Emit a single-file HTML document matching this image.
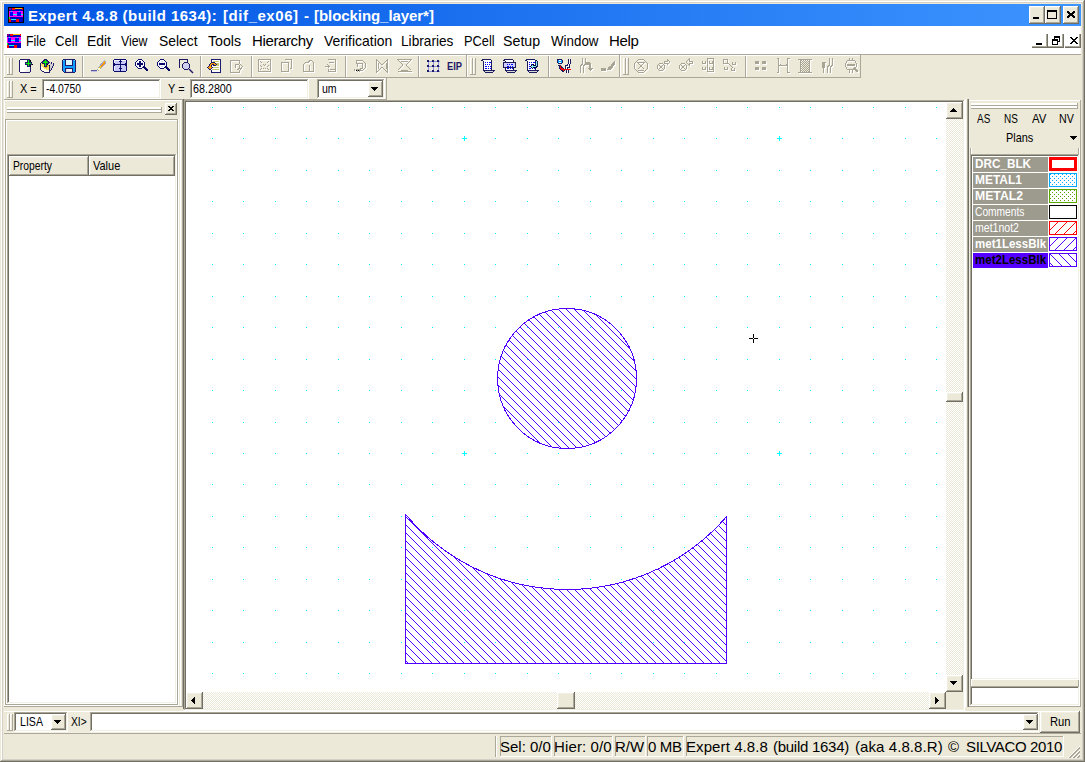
<!DOCTYPE html>
<html><head><meta charset="utf-8"><style>
html,body{margin:0;padding:0;width:1085px;height:762px;overflow:hidden;background:#ECE9D8}
.a{position:absolute}
.t{position:absolute;font-family:"Liberation Sans",sans-serif;white-space:pre}
</style></head><body>
<div class="a" style="left:0px;top:0px;width:1085px;height:762px;background:#ECE9D8"></div><div class="a" style="left:0px;top:1px;width:1084px;height:1px;background:#FFFFFF"></div><div class="a" style="left:1px;top:1px;width:1px;height:760px;background:#FFFFFF"></div><div class="a" style="left:2px;top:2px;width:1081px;height:1px;background:#D4D0C8"></div><div class="a" style="left:2px;top:2px;width:1px;height:758px;background:#D4D0C8"></div><div class="a" style="left:1084px;top:0px;width:1px;height:762px;background:#716F64"></div><div class="a" style="left:0px;top:761px;width:1085px;height:1px;background:#716F64"></div><div class="a" style="left:1083px;top:1px;width:1px;height:760px;background:#ACA899"></div><div class="a" style="left:1px;top:760px;width:1083px;height:1px;background:#ACA899"></div><div class="a" style="left:1082px;top:2px;width:1px;height:758px;background:#D4D0C8"></div><div class="a" style="left:2px;top:759px;width:1081px;height:1px;background:#D4D0C8"></div><div class="a" style="left:4px;top:4px;width:1077px;height:22px;background:linear-gradient(to right,#0054E3,#3D95FF)"></div><svg class="a" style="left:8px;top:7px" width="16" height="16" viewBox="0 0 16 16" shape-rendering="crispEdges">
<rect x="0" y="0" width="16" height="16" fill="#000"/>
<rect x="1" y="1" width="14" height="14" fill="#0000C0"/>
<rect x="1" y="1" width="2" height="2" fill="#800080"/>
<rect x="4" y="1" width="3" height="2" fill="#FF0000"/>
<rect x="7" y="1" width="7" height="1" fill="#FFC000"/>
<rect x="14" y="1" width="1" height="2" fill="#FF0000"/>
<rect x="1" y="4" width="14" height="6" fill="#FF00FF"/>
<rect x="2" y="5" width="3" height="4" fill="#0000FF"/>
<rect x="9" y="5" width="4" height="4" fill="#0000FF"/>
<rect x="5" y="7" width="4" height="1" fill="#00FFFF"/>
<rect x="13" y="7" width="2" height="1" fill="#00FFFF"/>
<rect x="3" y="4" width="1" height="1" fill="#00FFFF"/>
<rect x="11" y="4" width="1" height="1" fill="#00FFFF"/>
<rect x="1" y="10" width="1" height="2" fill="#00FF00"/>
<rect x="1" y="12" width="2" height="3" fill="#FF0000"/>
<rect x="8" y="12" width="3" height="3" fill="#FF0000"/>
<rect x="3" y="12" width="5" height="1" fill="#00FFFF"/>
</svg><div class="t" style="left:28px;top:8px;font-size:15px;line-height:15px;font-weight:bold;color:#fff;letter-spacing:0.48px;">Expert 4.8.8 (build 1634):</div><div class="t" style="left:223px;top:8px;font-size:15px;line-height:15px;font-weight:bold;color:#fff;letter-spacing:0.556px;">[dif_ex06]</div><div class="t" style="left:304px;top:8px;font-size:15px;line-height:15px;font-weight:bold;color:#fff;letter-spacing:0.0px;">-</div><div class="t" style="left:314px;top:8px;font-size:15px;line-height:15px;font-weight:bold;color:#fff;letter-spacing:-0.062px;">[blocking_layer*]</div><div class="a" style="left:1029px;top:6px;width:16px;height:18px;background:#716F64"></div><div class="a" style="left:1029px;top:6px;width:15px;height:17px;background:#FFFFFF"></div><div class="a" style="left:1030px;top:7px;width:14px;height:16px;background:#ACA899"></div><div class="a" style="left:1030px;top:7px;width:13px;height:15px;background:#F1EFE2"></div><div class="a" style="left:1031px;top:8px;width:12px;height:14px;background:#ECE9D8"></div><svg class="a" style="left:1029px;top:6px" width="16" height="18" shape-rendering="crispEdges"><rect x="4" y="11" width="6" height="2" fill="#000"/></svg><div class="a" style="left:1045px;top:6px;width:16px;height:18px;background:#716F64"></div><div class="a" style="left:1045px;top:6px;width:15px;height:17px;background:#FFFFFF"></div><div class="a" style="left:1046px;top:7px;width:14px;height:16px;background:#ACA899"></div><div class="a" style="left:1046px;top:7px;width:13px;height:15px;background:#F1EFE2"></div><div class="a" style="left:1047px;top:8px;width:12px;height:14px;background:#ECE9D8"></div><svg class="a" style="left:1045px;top:6px" width="16" height="18" shape-rendering="crispEdges"><rect x="2" y="4" width="10" height="9" fill="#000"/><rect x="3" y="6" width="8" height="6" fill="#ECE9D8"/></svg><div class="a" style="left:1063px;top:6px;width:16px;height:18px;background:#716F64"></div><div class="a" style="left:1063px;top:6px;width:15px;height:17px;background:#FFFFFF"></div><div class="a" style="left:1064px;top:7px;width:14px;height:16px;background:#ACA899"></div><div class="a" style="left:1064px;top:7px;width:13px;height:15px;background:#F1EFE2"></div><div class="a" style="left:1065px;top:8px;width:12px;height:14px;background:#ECE9D8"></div><svg class="a" style="left:1063px;top:6px" width="16" height="18" shape-rendering="crispEdges"><path d="M4 5h2v1h1v1h2v-1h1v-1h2v2h-1v1h-1v1h1v1h1v2h-2v-1h-1v-1h-2v1h-1v1h-2v-2h1v-1h1v-1h-1v-1h-1z" fill="#000"/></svg><div class="a" style="left:4px;top:26px;width:1077px;height:28px;background:#FFFFFF"></div><svg class="a" style="left:7px;top:34px" width="14" height="14" viewBox="1 1 14 14" shape-rendering="crispEdges">
<rect x="0" y="0" width="16" height="16" fill="#000"/>
<rect x="1" y="1" width="14" height="14" fill="#0000C0"/>
<rect x="1" y="1" width="2" height="2" fill="#800080"/>
<rect x="4" y="1" width="3" height="2" fill="#FF0000"/>
<rect x="7" y="1" width="7" height="1" fill="#FFC000"/>
<rect x="14" y="1" width="1" height="2" fill="#FF0000"/>
<rect x="1" y="4" width="14" height="6" fill="#FF00FF"/>
<rect x="2" y="5" width="3" height="4" fill="#0000FF"/>
<rect x="9" y="5" width="4" height="4" fill="#0000FF"/>
<rect x="5" y="7" width="4" height="1" fill="#00FFFF"/>
<rect x="13" y="7" width="2" height="1" fill="#00FFFF"/>
<rect x="3" y="4" width="1" height="1" fill="#00FFFF"/>
<rect x="11" y="4" width="1" height="1" fill="#00FFFF"/>
<rect x="1" y="10" width="1" height="2" fill="#00FF00"/>
<rect x="1" y="12" width="2" height="3" fill="#FF0000"/>
<rect x="8" y="12" width="3" height="3" fill="#FF0000"/>
<rect x="3" y="12" width="5" height="1" fill="#00FFFF"/>
</svg><div class="t" style="left:26.17px;top:33px;font-size:15px;line-height:15px;font-weight:normal;color:#000;transform:scaleX(0.8261);transform-origin:0 0;">File</div><div class="t" style="left:55.12px;top:33px;font-size:15px;line-height:15px;font-weight:normal;color:#000;transform:scaleX(0.8750);transform-origin:0 0;">Cell</div><div class="t" style="left:87.08px;top:33px;font-size:15px;line-height:15px;font-weight:normal;color:#000;transform:scaleX(0.9200);transform-origin:0 0;">Edit</div><div class="t" style="left:121.00px;top:33px;font-size:15px;line-height:15px;font-weight:normal;color:#000;transform:scaleX(0.8182);transform-origin:0 0;">View</div><div class="t" style="left:159.07px;top:33px;font-size:15px;line-height:15px;font-weight:normal;color:#000;transform:scaleX(0.9268);transform-origin:0 0;">Select</div><div class="t" style="left:208.00px;top:33px;font-size:15px;line-height:15px;font-weight:normal;color:#000;transform:scaleX(0.9429);transform-origin:0 0;">Tools</div><div class="t" style="left:252px;top:33px;font-size:15px;line-height:15px;font-weight:normal;color:#000;letter-spacing:-0.375px;">Hierarchy</div><div class="t" style="left:324.00px;top:33px;font-size:15px;line-height:15px;font-weight:normal;color:#000;transform:scaleX(0.9315);transform-origin:0 0;">Verification</div><div class="t" style="left:401.09px;top:33px;font-size:15px;line-height:15px;font-weight:normal;color:#000;transform:scaleX(0.9107);transform-origin:0 0;">Libraries</div><div class="t" style="left:464.15px;top:33px;font-size:15px;line-height:15px;font-weight:normal;color:#000;transform:scaleX(0.8529);transform-origin:0 0;">PCell</div><div class="t" style="left:503.05px;top:33px;font-size:15px;line-height:15px;font-weight:normal;color:#000;transform:scaleX(0.9474);transform-origin:0 0;">Setup</div><div class="t" style="left:551.00px;top:33px;font-size:15px;line-height:15px;font-weight:normal;color:#000;transform:scaleX(0.8889);transform-origin:0 0;">Window</div><div class="t" style="left:609px;top:33px;font-size:15px;line-height:15px;font-weight:normal;color:#000;letter-spacing:-0.333px;">Help</div><div class="a" style="left:1032px;top:34px;width:16px;height:14px;background:#716F64"></div><div class="a" style="left:1032px;top:34px;width:15px;height:13px;background:#ACA899"></div><div class="a" style="left:1032px;top:34px;width:14px;height:12px;background:#FFFFFF"></div><svg class="a" style="left:1032px;top:34px" width="16" height="14" shape-rendering="crispEdges"><rect x="4" y="9" width="6" height="2" fill="#000"/></svg><div class="a" style="left:1048px;top:34px;width:16px;height:14px;background:#716F64"></div><div class="a" style="left:1048px;top:34px;width:15px;height:13px;background:#ACA899"></div><div class="a" style="left:1048px;top:34px;width:14px;height:12px;background:#FFFFFF"></div><svg class="a" style="left:1048px;top:34px" width="16" height="14" shape-rendering="crispEdges"><rect x="6" y="2" width="6" height="6" fill="#000"/><rect x="7" y="4" width="4" height="3" fill="#fff"/><rect x="4" y="5" width="6" height="6" fill="#000"/><rect x="5" y="7" width="4" height="3" fill="#fff"/></svg><div class="a" style="left:1065px;top:34px;width:16px;height:14px;background:#716F64"></div><div class="a" style="left:1065px;top:34px;width:15px;height:13px;background:#ACA899"></div><div class="a" style="left:1065px;top:34px;width:14px;height:12px;background:#FFFFFF"></div><svg class="a" style="left:1065px;top:34px" width="16" height="14" shape-rendering="crispEdges"><path d="M5 3h2v1h1v1h2v-1h1v-1h2v1h-1v1h-1v1h-1v1h1v1h1v1h1v1h-2v-1h-1v-1h-2v1h-1v1h-2v-1h1v-1h1v-1h1v-1h-1v-1h-1v-1h-1z" fill="#000"/></svg><div class="a" style="left:4px;top:54px;width:1077px;height:1px;background:#ACA899"></div><div class="a" style="left:4px;top:55px;width:462px;height:1px;background:#FFFFFF"></div><div class="a" style="left:4px;top:55px;width:1px;height:22px;background:#FFFFFF"></div><div class="a" style="left:466px;top:55px;width:1px;height:23px;background:#ACA899"></div><div class="a" style="left:4px;top:77px;width:463px;height:1px;background:#ACA899"></div><div class="a" style="left:467px;top:55px;width:152px;height:1px;background:#FFFFFF"></div><div class="a" style="left:467px;top:55px;width:1px;height:22px;background:#FFFFFF"></div><div class="a" style="left:619px;top:55px;width:1px;height:23px;background:#ACA899"></div><div class="a" style="left:467px;top:77px;width:153px;height:1px;background:#ACA899"></div><div class="a" style="left:620px;top:55px;width:240px;height:1px;background:#FFFFFF"></div><div class="a" style="left:620px;top:55px;width:1px;height:22px;background:#FFFFFF"></div><div class="a" style="left:860px;top:55px;width:1px;height:23px;background:#ACA899"></div><div class="a" style="left:620px;top:77px;width:241px;height:1px;background:#ACA899"></div><div class="a" style="left:7px;top:58px;width:3px;height:17px;background:#ACA899"></div><div class="a" style="left:7px;top:58px;width:2px;height:16px;background:#FFFFFF"></div><div class="a" style="left:8px;top:59px;width:1px;height:15px;background:#ECE9D8"></div><div class="a" style="left:10px;top:58px;width:3px;height:17px;background:#ACA899"></div><div class="a" style="left:10px;top:58px;width:2px;height:16px;background:#FFFFFF"></div><div class="a" style="left:11px;top:59px;width:1px;height:15px;background:#ECE9D8"></div><div class="a" style="left:470px;top:58px;width:3px;height:17px;background:#ACA899"></div><div class="a" style="left:470px;top:58px;width:2px;height:16px;background:#FFFFFF"></div><div class="a" style="left:471px;top:59px;width:1px;height:15px;background:#ECE9D8"></div><div class="a" style="left:473px;top:58px;width:3px;height:17px;background:#ACA899"></div><div class="a" style="left:473px;top:58px;width:2px;height:16px;background:#FFFFFF"></div><div class="a" style="left:474px;top:59px;width:1px;height:15px;background:#ECE9D8"></div><div class="a" style="left:623px;top:58px;width:3px;height:17px;background:#ACA899"></div><div class="a" style="left:623px;top:58px;width:2px;height:16px;background:#FFFFFF"></div><div class="a" style="left:624px;top:59px;width:1px;height:15px;background:#ECE9D8"></div><div class="a" style="left:626px;top:58px;width:3px;height:17px;background:#ACA899"></div><div class="a" style="left:626px;top:58px;width:2px;height:16px;background:#FFFFFF"></div><div class="a" style="left:627px;top:59px;width:1px;height:15px;background:#ECE9D8"></div><div class="a" style="left:82px;top:56px;width:1px;height:21px;background:#ACA899"></div><div class="a" style="left:83px;top:56px;width:1px;height:21px;background:#FFFFFF"></div><div class="a" style="left:200px;top:56px;width:1px;height:21px;background:#ACA899"></div><div class="a" style="left:201px;top:56px;width:1px;height:21px;background:#FFFFFF"></div><div class="a" style="left:251px;top:56px;width:1px;height:21px;background:#ACA899"></div><div class="a" style="left:252px;top:56px;width:1px;height:21px;background:#FFFFFF"></div><div class="a" style="left:345px;top:56px;width:1px;height:21px;background:#ACA899"></div><div class="a" style="left:346px;top:56px;width:1px;height:21px;background:#FFFFFF"></div><div class="a" style="left:418px;top:56px;width:1px;height:21px;background:#ACA899"></div><div class="a" style="left:419px;top:56px;width:1px;height:21px;background:#FFFFFF"></div><div class="a" style="left:548px;top:56px;width:1px;height:21px;background:#ACA899"></div><div class="a" style="left:549px;top:56px;width:1px;height:21px;background:#FFFFFF"></div><div class="a" style="left:745px;top:56px;width:1px;height:21px;background:#ACA899"></div><div class="a" style="left:746px;top:56px;width:1px;height:21px;background:#FFFFFF"></div><svg class="a" style="left:91px;top:58px" width="17" height="17" shape-rendering="crispEdges"><rect x="0" y="12" width="6" height="1" fill="#5A5A9A"/><rect x="0" y="13" width="6" height="1" fill="#C0C0E0"/>
<path d="M6.5 12.5l1-3 6-7 1 1v2l-6 6z" fill="#FFD000" stroke="#A0A0C0"/>
<path d="M6.5 12.5l1-3 2 2z" fill="#FFFFC0"/><path d="M10 8l4-5v2l-4 4z" fill="#FF9000"/></svg><svg class="a" style="left:179px;top:58px" width="17" height="17" shape-rendering="crispEdges"><path d="M0.5 9.5v-8h8v2" fill="none" stroke="#1F1A66"/>
<path d="M5.5 4.5h3l2 2v3l-2 2h-3l-2-2v-3z" fill="#D0D0F0" stroke="#1F1A66"/>
<path d="M10 11l4 4" stroke="#1F1A66" stroke-width="1.5" shape-rendering="auto"/></svg><svg class="a" style="left:229px;top:58px" width="17" height="17" shape-rendering="crispEdges"><g transform="translate(1,1)"><path d="M1.5 2.5h9v3l3 3-3 4v2h-9z" fill="none" stroke="#FFFFFF"/><path d="M6.5 9.5v-3h3l1 1v3l-2 1" fill="none" stroke="#FFFFFF"/></g><path d="M1.5 2.5h9v3l3 3-3 4v2h-9z" fill="none" stroke="#A8A595"/><path d="M6.5 9.5v-3h3l1 1v3l-2 1" fill="none" stroke="#A8A595"/></svg><svg class="a" style="left:258px;top:58px" width="17" height="17" shape-rendering="crispEdges"><g transform="translate(1,1)"><rect x="0.5" y="1.5" width="12" height="12" fill="none" stroke="#FFFFFF"/><path d="M2 3l9 9M11 3l-9 9M2 7l4 4M11 7l-4 4" stroke="#FFFFFF" stroke-dasharray="1 1"/></g><rect x="0.5" y="1.5" width="12" height="12" fill="none" stroke="#A8A595"/><path d="M2 3l9 9M11 3l-9 9M2 7l4 4M11 7l-4 4" stroke="#A8A595" stroke-dasharray="1 1"/></svg><svg class="a" style="left:280px;top:58px" width="17" height="17" shape-rendering="crispEdges"><g transform="translate(1,1)"><path d="M4.5 1.5h7v9h-2" fill="none" stroke="#FFFFFF"/><rect x="1.5" y="4.5" width="7" height="9" fill="none" stroke="#FFFFFF"/></g><path d="M4.5 1.5h7v9h-2" fill="none" stroke="#A8A595"/><rect x="1.5" y="4.5" width="7" height="9" fill="none" stroke="#A8A595"/></svg><svg class="a" style="left:302px;top:58px" width="17" height="17" shape-rendering="crispEdges"><g transform="translate(1,1)"><path d="M1.5 13.5v-7l2-2h3l1-2h2l2 2v9z M7.5 13.5v-7" fill="none" stroke="#FFFFFF"/></g><path d="M1.5 13.5v-7l2-2h3l1-2h2l2 2v9z M7.5 13.5v-7" fill="none" stroke="#A8A595"/></svg><svg class="a" style="left:324px;top:58px" width="17" height="17" shape-rendering="crispEdges"><g transform="translate(1,1)"><path d="M3.5 1.5h8v12h-7v-3" fill="none" stroke="#FFFFFF"/><path d="M0.5 8.5h5l-2-2M5.5 8.5l-2 2" fill="none" stroke="#FFFFFF"/><path d="M5 4h5M6 11h5" stroke="#FFFFFF"/></g><path d="M3.5 1.5h8v12h-7v-3" fill="none" stroke="#A8A595"/><path d="M0.5 8.5h5l-2-2M5.5 8.5l-2 2" fill="none" stroke="#A8A595"/><path d="M5 4h5M6 11h5" stroke="#A8A595"/></svg><svg class="a" style="left:353px;top:58px" width="17" height="17" shape-rendering="crispEdges"><g transform="translate(1,1)"><path d="M3.5 5.5v-3h6l3 3v4l-3 3h-2v-2h2v-5h-5v3" fill="none" stroke="#FFFFFF"/><path d="M1 11v2M3 11h1v3M5 11h1v3" stroke="#FFFFFF"/></g><path d="M3.5 5.5v-3h6l3 3v4l-3 3h-2v-2h2v-5h-5v3" fill="none" stroke="#A8A595"/><path d="M1 11v2M3 11h1v3M5 11h1v3" stroke="#A8A595"/></svg><svg class="a" style="left:375px;top:58px" width="17" height="17" shape-rendering="crispEdges"><g transform="translate(1,1)"><path d="M1.5 1.5v13M12.5 1.5v13M1.5 1.5l5 5h1l5-5M1.5 14.5l5-5h1l5 5" fill="none" stroke="#FFFFFF"/><path d="M3 5v6M11 5v6" stroke="#FFFFFF"/></g><path d="M1.5 1.5v13M12.5 1.5v13M1.5 1.5l5 5h1l5-5M1.5 14.5l5-5h1l5 5" fill="none" stroke="#A8A595"/><path d="M3 5v6M11 5v6" stroke="#A8A595"/></svg><svg class="a" style="left:397px;top:58px" width="17" height="17" shape-rendering="crispEdges"><g transform="translate(1,1)"><path d="M0.5 1.5h14M0.5 13.5h14M0.5 1.5l5 5v1l-5 5M14.5 1.5l-5 5v1l5 5" fill="none" stroke="#FFFFFF"/><path d="M4 3h7M4 12h7" stroke="#FFFFFF"/></g><path d="M0.5 1.5h14M0.5 13.5h14M0.5 1.5l5 5v1l-5 5M14.5 1.5l-5 5v1l5 5" fill="none" stroke="#A8A595"/><path d="M4 3h7M4 12h7" stroke="#A8A595"/></svg><svg class="a" style="left:426px;top:58px" width="17" height="17" shape-rendering="crispEdges"><path d="M2 2v12M7 2v12M12 2v12M1 3h13M1 8h13M1 13h13" stroke="#9090E0"/><rect x="1" y="2" width="2" height="2" fill="#1F1A66"/><rect x="1" y="7" width="2" height="2" fill="#1F1A66"/><rect x="1" y="12" width="2" height="2" fill="#1F1A66"/><rect x="6" y="2" width="2" height="2" fill="#1F1A66"/><rect x="6" y="7" width="2" height="2" fill="#1F1A66"/><rect x="6" y="12" width="2" height="2" fill="#1F1A66"/><rect x="11" y="2" width="2" height="2" fill="#1F1A66"/><rect x="11" y="7" width="2" height="2" fill="#1F1A66"/><rect x="11" y="12" width="2" height="2" fill="#1F1A66"/></svg><svg class="a" style="left:579px;top:58px" width="17" height="17" shape-rendering="crispEdges"><g transform="translate(1,1)"><path d="M1.5 15v-7l2-2v-6M4.5 15v-7l2-2v-6" fill="none" stroke="#FFFFFF"/><path d="M7 4h3l2 2v4h2l-3 3-3-3h2v-3h-3z" fill="#FFFFFF"/></g><path d="M1.5 15v-7l2-2v-6M4.5 15v-7l2-2v-6" fill="none" stroke="#A8A595"/><path d="M7 4h3l2 2v4h2l-3 3-3-3h2v-3h-3z" fill="#A8A595"/></svg><svg class="a" style="left:601px;top:58px" width="17" height="17" shape-rendering="crispEdges"><g transform="translate(1,1)"><rect x="0" y="10" width="5" height="3" fill="#FFFFFF"/><path d="M6 12l2-4 6-6v4l-4 6z" fill="#FFFFFF"/><rect x="9" y="7" width="1" height="1" fill="#ECE9D8"/></g><rect x="0" y="10" width="5" height="3" fill="#A8A595"/><path d="M6 12l2-4 6-6v4l-4 6z" fill="#A8A595"/><rect x="9" y="7" width="1" height="1" fill="#ECE9D8"/></svg><svg class="a" style="left:634px;top:59px" width="17" height="17" shape-rendering="crispEdges"><g transform="translate(1,1)"><path d="M4.5 0.5h5l4 4v5l-4 4h-5l-4-4v-5z" fill="none" stroke="#FFFFFF"/><path d="M3.5 3.5l7 7M10.5 3.5l-7 7M4 3h6M4 11h6" stroke="#FFFFFF"/></g><path d="M4.5 0.5h5l4 4v5l-4 4h-5l-4-4v-5z" fill="none" stroke="#A8A595"/><path d="M3.5 3.5l7 7M10.5 3.5l-7 7M4 3h6M4 11h6" stroke="#A8A595"/></svg><svg class="a" style="left:656px;top:58px" width="17" height="17" shape-rendering="crispEdges"><g transform="translate(1,1)"><path d="M3.5 5.5h3l2 2v3l-2 2h-3l-2-2v-3z" fill="none" stroke="#FFFFFF"/><path d="M3 7l4 4M7 7l-4 4" stroke="#FFFFFF"/><path d="M8 3h3v-2l3 3-3 3v-2h-3z" fill="none" stroke="#FFFFFF"/></g><path d="M3.5 5.5h3l2 2v3l-2 2h-3l-2-2v-3z" fill="none" stroke="#A8A595"/><path d="M3 7l4 4M7 7l-4 4" stroke="#A8A595"/><path d="M8 3h3v-2l3 3-3 3v-2h-3z" fill="none" stroke="#A8A595"/></svg><svg class="a" style="left:678px;top:58px" width="17" height="17" shape-rendering="crispEdges"><g transform="translate(1,1)"><path d="M3.5 5.5h3l2 2v3l-2 2h-3l-2-2v-3z" fill="none" stroke="#FFFFFF"/><path d="M3 7l4 4M7 7l-4 4" stroke="#FFFFFF"/><path d="M14 3h-3v-2l-3 3 3 3v-2h3z" fill="none" stroke="#FFFFFF"/></g><path d="M3.5 5.5h3l2 2v3l-2 2h-3l-2-2v-3z" fill="none" stroke="#A8A595"/><path d="M3 7l4 4M7 7l-4 4" stroke="#A8A595"/><path d="M14 3h-3v-2l-3 3 3 3v-2h3z" fill="none" stroke="#A8A595"/></svg><svg class="a" style="left:701px;top:58px" width="17" height="17" shape-rendering="crispEdges"><g transform="translate(1,1)"><rect x="6.5" y="0.5" width="6" height="13" fill="none" stroke="#FFFFFF"/><path d="M1 3v2h3v-2M1 9v2h3v-2M8 3v2h3v-2M8 9v2h3v-2" fill="none" stroke="#FFFFFF"/></g><rect x="6.5" y="0.5" width="6" height="13" fill="none" stroke="#A8A595"/><path d="M1 3v2h3v-2M1 9v2h3v-2M8 3v2h3v-2M8 9v2h3v-2" fill="none" stroke="#A8A595"/></svg><svg class="a" style="left:723px;top:58px" width="17" height="17" shape-rendering="crispEdges"><g transform="translate(1,1)"><rect x="0.5" y="1.5" width="4" height="4" fill="none" stroke="#FFFFFF"/><path d="M5 5l5 5M9 4v2h3v-2M1 9v2h3v-2M8 10v2h3v-2" fill="none" stroke="#FFFFFF"/></g><rect x="0.5" y="1.5" width="4" height="4" fill="none" stroke="#A8A595"/><path d="M5 5l5 5M9 4v2h3v-2M1 9v2h3v-2M8 10v2h3v-2" fill="none" stroke="#A8A595"/></svg><svg class="a" style="left:755px;top:58px" width="17" height="17" shape-rendering="crispEdges"><g transform="translate(1,1)"><rect x="0" y="3" width="4" height="3" fill="#FFFFFF"/><rect x="7" y="3" width="4" height="3" fill="#FFFFFF"/><rect x="0" y="9" width="4" height="3" fill="#FFFFFF"/><rect x="7" y="9" width="4" height="3" fill="#FFFFFF"/></g><rect x="0" y="3" width="4" height="3" fill="#A8A595"/><rect x="7" y="3" width="4" height="3" fill="#A8A595"/><rect x="0" y="9" width="4" height="3" fill="#A8A595"/><rect x="7" y="9" width="4" height="3" fill="#A8A595"/></svg><svg class="a" style="left:776px;top:58px" width="17" height="17" shape-rendering="crispEdges"><g transform="translate(1,1)"><path d="M0.5 0.5h2v14h-2M13.5 0.5h-2v14h2M2 7h10M4 6v2M10 6v2" fill="none" stroke="#FFFFFF"/></g><path d="M0.5 0.5h2v14h-2M13.5 0.5h-2v14h2M2 7h10M4 6v2M10 6v2" fill="none" stroke="#A8A595"/></svg><svg class="a" style="left:798px;top:58px" width="17" height="17" shape-rendering="crispEdges"><g transform="translate(1,1)"><path d="M0 1.5h14M0 14.5h14M2.5 1v13M11.5 1v13" stroke="#FFFFFF"/><rect x="3" y="2" width="1" height="1" fill="#FFFFFF"/><rect x="3" y="4" width="1" height="1" fill="#FFFFFF"/><rect x="3" y="6" width="1" height="1" fill="#FFFFFF"/><rect x="3" y="8" width="1" height="1" fill="#FFFFFF"/><rect x="3" y="10" width="1" height="1" fill="#FFFFFF"/><rect x="3" y="12" width="1" height="1" fill="#FFFFFF"/><rect x="4" y="3" width="1" height="1" fill="#FFFFFF"/><rect x="4" y="5" width="1" height="1" fill="#FFFFFF"/><rect x="4" y="7" width="1" height="1" fill="#FFFFFF"/><rect x="4" y="9" width="1" height="1" fill="#FFFFFF"/><rect x="4" y="11" width="1" height="1" fill="#FFFFFF"/><rect x="4" y="13" width="1" height="1" fill="#FFFFFF"/><rect x="5" y="2" width="1" height="1" fill="#FFFFFF"/><rect x="5" y="4" width="1" height="1" fill="#FFFFFF"/><rect x="5" y="6" width="1" height="1" fill="#FFFFFF"/><rect x="5" y="8" width="1" height="1" fill="#FFFFFF"/><rect x="5" y="10" width="1" height="1" fill="#FFFFFF"/><rect x="5" y="12" width="1" height="1" fill="#FFFFFF"/><rect x="6" y="3" width="1" height="1" fill="#FFFFFF"/><rect x="6" y="5" width="1" height="1" fill="#FFFFFF"/><rect x="6" y="7" width="1" height="1" fill="#FFFFFF"/><rect x="6" y="9" width="1" height="1" fill="#FFFFFF"/><rect x="6" y="11" width="1" height="1" fill="#FFFFFF"/><rect x="6" y="13" width="1" height="1" fill="#FFFFFF"/><rect x="7" y="2" width="1" height="1" fill="#FFFFFF"/><rect x="7" y="4" width="1" height="1" fill="#FFFFFF"/><rect x="7" y="6" width="1" height="1" fill="#FFFFFF"/><rect x="7" y="8" width="1" height="1" fill="#FFFFFF"/><rect x="7" y="10" width="1" height="1" fill="#FFFFFF"/><rect x="7" y="12" width="1" height="1" fill="#FFFFFF"/><rect x="8" y="3" width="1" height="1" fill="#FFFFFF"/><rect x="8" y="5" width="1" height="1" fill="#FFFFFF"/><rect x="8" y="7" width="1" height="1" fill="#FFFFFF"/><rect x="8" y="9" width="1" height="1" fill="#FFFFFF"/><rect x="8" y="11" width="1" height="1" fill="#FFFFFF"/><rect x="8" y="13" width="1" height="1" fill="#FFFFFF"/><rect x="9" y="2" width="1" height="1" fill="#FFFFFF"/><rect x="9" y="4" width="1" height="1" fill="#FFFFFF"/><rect x="9" y="6" width="1" height="1" fill="#FFFFFF"/><rect x="9" y="8" width="1" height="1" fill="#FFFFFF"/><rect x="9" y="10" width="1" height="1" fill="#FFFFFF"/><rect x="9" y="12" width="1" height="1" fill="#FFFFFF"/><rect x="10" y="3" width="1" height="1" fill="#FFFFFF"/><rect x="10" y="5" width="1" height="1" fill="#FFFFFF"/><rect x="10" y="7" width="1" height="1" fill="#FFFFFF"/><rect x="10" y="9" width="1" height="1" fill="#FFFFFF"/><rect x="10" y="11" width="1" height="1" fill="#FFFFFF"/><rect x="10" y="13" width="1" height="1" fill="#FFFFFF"/></g><path d="M0 1.5h14M0 14.5h14M2.5 1v13M11.5 1v13" stroke="#A8A595"/><rect x="3" y="2" width="1" height="1" fill="#A8A595"/><rect x="3" y="4" width="1" height="1" fill="#A8A595"/><rect x="3" y="6" width="1" height="1" fill="#A8A595"/><rect x="3" y="8" width="1" height="1" fill="#A8A595"/><rect x="3" y="10" width="1" height="1" fill="#A8A595"/><rect x="3" y="12" width="1" height="1" fill="#A8A595"/><rect x="4" y="3" width="1" height="1" fill="#A8A595"/><rect x="4" y="5" width="1" height="1" fill="#A8A595"/><rect x="4" y="7" width="1" height="1" fill="#A8A595"/><rect x="4" y="9" width="1" height="1" fill="#A8A595"/><rect x="4" y="11" width="1" height="1" fill="#A8A595"/><rect x="4" y="13" width="1" height="1" fill="#A8A595"/><rect x="5" y="2" width="1" height="1" fill="#A8A595"/><rect x="5" y="4" width="1" height="1" fill="#A8A595"/><rect x="5" y="6" width="1" height="1" fill="#A8A595"/><rect x="5" y="8" width="1" height="1" fill="#A8A595"/><rect x="5" y="10" width="1" height="1" fill="#A8A595"/><rect x="5" y="12" width="1" height="1" fill="#A8A595"/><rect x="6" y="3" width="1" height="1" fill="#A8A595"/><rect x="6" y="5" width="1" height="1" fill="#A8A595"/><rect x="6" y="7" width="1" height="1" fill="#A8A595"/><rect x="6" y="9" width="1" height="1" fill="#A8A595"/><rect x="6" y="11" width="1" height="1" fill="#A8A595"/><rect x="6" y="13" width="1" height="1" fill="#A8A595"/><rect x="7" y="2" width="1" height="1" fill="#A8A595"/><rect x="7" y="4" width="1" height="1" fill="#A8A595"/><rect x="7" y="6" width="1" height="1" fill="#A8A595"/><rect x="7" y="8" width="1" height="1" fill="#A8A595"/><rect x="7" y="10" width="1" height="1" fill="#A8A595"/><rect x="7" y="12" width="1" height="1" fill="#A8A595"/><rect x="8" y="3" width="1" height="1" fill="#A8A595"/><rect x="8" y="5" width="1" height="1" fill="#A8A595"/><rect x="8" y="7" width="1" height="1" fill="#A8A595"/><rect x="8" y="9" width="1" height="1" fill="#A8A595"/><rect x="8" y="11" width="1" height="1" fill="#A8A595"/><rect x="8" y="13" width="1" height="1" fill="#A8A595"/><rect x="9" y="2" width="1" height="1" fill="#A8A595"/><rect x="9" y="4" width="1" height="1" fill="#A8A595"/><rect x="9" y="6" width="1" height="1" fill="#A8A595"/><rect x="9" y="8" width="1" height="1" fill="#A8A595"/><rect x="9" y="10" width="1" height="1" fill="#A8A595"/><rect x="9" y="12" width="1" height="1" fill="#A8A595"/><rect x="10" y="3" width="1" height="1" fill="#A8A595"/><rect x="10" y="5" width="1" height="1" fill="#A8A595"/><rect x="10" y="7" width="1" height="1" fill="#A8A595"/><rect x="10" y="9" width="1" height="1" fill="#A8A595"/><rect x="10" y="11" width="1" height="1" fill="#A8A595"/><rect x="10" y="13" width="1" height="1" fill="#A8A595"/></svg><svg class="a" style="left:820px;top:58px" width="17" height="17" shape-rendering="crispEdges"><g transform="translate(1,1)"><path d="M1.5 4.5h4M3.5 4v11M7.5 15v-6l2-2v-7M10.5 15v-6l2-2v-7" fill="none" stroke="#FFFFFF"/><rect x="2" y="4" width="3" height="6" fill="#FFFFFF"/></g><path d="M1.5 4.5h4M3.5 4v11M7.5 15v-6l2-2v-7M10.5 15v-6l2-2v-7" fill="none" stroke="#A8A595"/><rect x="2" y="4" width="3" height="6" fill="#A8A595"/></svg><svg class="a" style="left:844px;top:58px" width="17" height="17" shape-rendering="crispEdges"><g transform="translate(1,1)"><path d="M5.5 0v2M8.5 0v2M3.5 2.5h7l2 3v3l-2 3h-7l-2-3v-3z M5.5 12v3M8.5 12v3" fill="none" stroke="#FFFFFF"/><rect x="3" y="6" width="8" height="2" fill="#FFFFFF"/><path d="M10 10l4 4" stroke="#FFFFFF" stroke-width="2"/></g><path d="M5.5 0v2M8.5 0v2M3.5 2.5h7l2 3v3l-2 3h-7l-2-3v-3z M5.5 12v3M8.5 12v3" fill="none" stroke="#A8A595"/><rect x="3" y="6" width="8" height="2" fill="#A8A595"/><path d="M10 10l4 4" stroke="#A8A595" stroke-width="2"/></svg><svg class="a" style="left:18px;top:57px" width="16" height="17" shape-rendering="crispEdges"><rect x="2" y="2" width="10" height="1" fill="#231C6B"/><rect x="1" y="3" width="1" height="1" fill="#231C6B"/><rect x="2" y="3" width="7" height="1" fill="#FFFFFF"/><rect x="9" y="3" width="1" height="1" fill="#231C6B"/><rect x="10" y="3" width="1" height="1" fill="#00F000"/><rect x="11" y="3" width="1" height="1" fill="#231C6B"/><rect x="12" y="3" width="1" height="1" fill="#000000"/><rect x="1" y="4" width="1" height="1" fill="#231C6B"/><rect x="2" y="4" width="7" height="1" fill="#FFFFFF"/><rect x="9" y="4" width="1" height="1" fill="#231C6B"/><rect x="10" y="4" width="1" height="1" fill="#00F000"/><rect x="11" y="4" width="1" height="1" fill="#231C6B"/><rect x="12" y="4" width="1" height="1" fill="#000000"/><rect x="1" y="5" width="1" height="1" fill="#231C6B"/><rect x="2" y="5" width="5" height="1" fill="#FFFFFF"/><rect x="7" y="5" width="3" height="1" fill="#231C6B"/><rect x="10" y="5" width="1" height="1" fill="#00F000"/><rect x="11" y="5" width="3" height="1" fill="#231C6B"/><rect x="1" y="6" width="1" height="1" fill="#231C6B"/><rect x="2" y="6" width="5" height="1" fill="#FFFFFF"/><rect x="7" y="6" width="1" height="1" fill="#231C6B"/><rect x="8" y="6" width="5" height="1" fill="#00F000"/><rect x="13" y="6" width="1" height="1" fill="#231C6B"/><rect x="1" y="7" width="1" height="1" fill="#231C6B"/><rect x="2" y="7" width="5" height="1" fill="#FFFFFF"/><rect x="7" y="7" width="3" height="1" fill="#231C6B"/><rect x="10" y="7" width="1" height="1" fill="#00F000"/><rect x="11" y="7" width="3" height="1" fill="#231C6B"/><rect x="14" y="7" width="1" height="1" fill="#000000"/><rect x="1" y="8" width="1" height="1" fill="#231C6B"/><rect x="2" y="8" width="7" height="1" fill="#FFFFFF"/><rect x="9" y="8" width="1" height="1" fill="#231C6B"/><rect x="10" y="8" width="1" height="1" fill="#00F000"/><rect x="11" y="8" width="1" height="1" fill="#231C6B"/><rect x="12" y="8" width="1" height="1" fill="#000000"/><rect x="1" y="9" width="1" height="1" fill="#231C6B"/><rect x="2" y="9" width="7" height="1" fill="#FFFFFF"/><rect x="9" y="9" width="3" height="1" fill="#231C6B"/><rect x="12" y="9" width="1" height="1" fill="#000000"/><rect x="1" y="10" width="1" height="1" fill="#231C6B"/><rect x="2" y="10" width="10" height="1" fill="#FFFFFF"/><rect x="12" y="10" width="1" height="1" fill="#231C6B"/><rect x="1" y="11" width="1" height="1" fill="#231C6B"/><rect x="2" y="11" width="8" height="1" fill="#FFFFFF"/><rect x="10" y="11" width="2" height="1" fill="#EEEEEE"/><rect x="12" y="11" width="1" height="1" fill="#231C6B"/><rect x="1" y="12" width="1" height="1" fill="#231C6B"/><rect x="2" y="12" width="7" height="1" fill="#FFFFFF"/><rect x="9" y="12" width="3" height="1" fill="#EEEEEE"/><rect x="12" y="12" width="1" height="1" fill="#231C6B"/><rect x="1" y="13" width="1" height="1" fill="#231C6B"/><rect x="2" y="13" width="6" height="1" fill="#FFFFFF"/><rect x="8" y="13" width="4" height="1" fill="#EEEEEE"/><rect x="12" y="13" width="1" height="1" fill="#231C6B"/><rect x="1" y="14" width="1" height="1" fill="#231C6B"/><rect x="2" y="14" width="5" height="1" fill="#FFFFFF"/><rect x="7" y="14" width="4" height="1" fill="#EEEEEE"/><rect x="11" y="14" width="1" height="1" fill="#DDDDDD"/><rect x="12" y="14" width="1" height="1" fill="#231C6B"/><rect x="2" y="15" width="10" height="1" fill="#231C6B"/></svg><svg class="a" style="left:39px;top:57px" width="16" height="17" shape-rendering="crispEdges"><rect x="5" y="2" width="3" height="1" fill="#231C6B"/><rect x="4" y="3" width="2" height="1" fill="#231C6B"/><rect x="6" y="3" width="1" height="1" fill="#00F000"/><rect x="7" y="3" width="2" height="1" fill="#231C6B"/><rect x="3" y="4" width="2" height="1" fill="#231C6B"/><rect x="5" y="4" width="3" height="1" fill="#00F000"/><rect x="8" y="4" width="2" height="1" fill="#231C6B"/><rect x="2" y="5" width="2" height="1" fill="#231C6B"/><rect x="4" y="5" width="5" height="1" fill="#00F000"/><rect x="9" y="5" width="2" height="1" fill="#231C6B"/><rect x="12" y="5" width="1" height="1" fill="#231C6B"/><rect x="1" y="6" width="1" height="1" fill="#231C6B"/><rect x="2" y="6" width="1" height="1" fill="#F8E060"/><rect x="3" y="6" width="3" height="1" fill="#231C6B"/><rect x="6" y="6" width="1" height="1" fill="#00F000"/><rect x="7" y="6" width="3" height="1" fill="#231C6B"/><rect x="10" y="6" width="2" height="1" fill="#D0D0D0"/><rect x="12" y="6" width="1" height="1" fill="#231C6B"/><rect x="14" y="6" width="1" height="1" fill="#231C6B"/><rect x="1" y="7" width="1" height="1" fill="#231C6B"/><rect x="2" y="7" width="3" height="1" fill="#F8E060"/><rect x="5" y="7" width="1" height="1" fill="#231C6B"/><rect x="6" y="7" width="1" height="1" fill="#00F000"/><rect x="7" y="7" width="1" height="1" fill="#231C6B"/><rect x="8" y="7" width="1" height="1" fill="#000000"/><rect x="9" y="7" width="5" height="1" fill="#D0D0D0"/><rect x="14" y="7" width="1" height="1" fill="#231C6B"/><rect x="1" y="8" width="1" height="1" fill="#231C6B"/><rect x="2" y="8" width="3" height="1" fill="#F8E060"/><rect x="5" y="8" width="1" height="1" fill="#231C6B"/><rect x="6" y="8" width="1" height="1" fill="#00F000"/><rect x="7" y="8" width="1" height="1" fill="#231C6B"/><rect x="8" y="8" width="2" height="1" fill="#E0A020"/><rect x="10" y="8" width="1" height="1" fill="#000000"/><rect x="11" y="8" width="3" height="1" fill="#D0D0D0"/><rect x="14" y="8" width="1" height="1" fill="#231C6B"/><rect x="1" y="9" width="1" height="1" fill="#231C6B"/><rect x="2" y="9" width="1" height="1" fill="#FFFDE8"/><rect x="3" y="9" width="2" height="1" fill="#F8E060"/><rect x="5" y="9" width="3" height="1" fill="#231C6B"/><rect x="8" y="9" width="1" height="1" fill="#E0A020"/><rect x="9" y="9" width="1" height="1" fill="#F8E060"/><rect x="10" y="9" width="1" height="1" fill="#231C6B"/><rect x="11" y="9" width="2" height="1" fill="#D0D0D0"/><rect x="13" y="9" width="1" height="1" fill="#231C6B"/><rect x="1" y="10" width="1" height="1" fill="#231C6B"/><rect x="2" y="10" width="2" height="1" fill="#FFFDE8"/><rect x="4" y="10" width="2" height="1" fill="#F8E060"/><rect x="6" y="10" width="2" height="1" fill="#E0A020"/><rect x="8" y="10" width="2" height="1" fill="#F8E060"/><rect x="10" y="10" width="1" height="1" fill="#231C6B"/><rect x="11" y="10" width="2" height="1" fill="#D0D0D0"/><rect x="13" y="10" width="1" height="1" fill="#231C6B"/><rect x="1" y="11" width="1" height="1" fill="#231C6B"/><rect x="2" y="11" width="3" height="1" fill="#FFFDE8"/><rect x="5" y="11" width="5" height="1" fill="#F8E060"/><rect x="10" y="11" width="1" height="1" fill="#231C6B"/><rect x="11" y="11" width="1" height="1" fill="#D0D0D0"/><rect x="12" y="11" width="1" height="1" fill="#231C6B"/><rect x="1" y="12" width="1" height="1" fill="#231C6B"/><rect x="2" y="12" width="5" height="1" fill="#FFFDE8"/><rect x="7" y="12" width="3" height="1" fill="#F8E060"/><rect x="10" y="12" width="1" height="1" fill="#231C6B"/><rect x="11" y="12" width="1" height="1" fill="#D0D0D0"/><rect x="12" y="12" width="1" height="1" fill="#231C6B"/><rect x="2" y="13" width="1" height="1" fill="#231C6B"/><rect x="3" y="13" width="7" height="1" fill="#FFFDE8"/><rect x="10" y="13" width="2" height="1" fill="#231C6B"/><rect x="3" y="14" width="2" height="1" fill="#231C6B"/><rect x="5" y="14" width="5" height="1" fill="#FFFDE8"/><rect x="10" y="14" width="1" height="1" fill="#231C6B"/><rect x="5" y="15" width="6" height="1" fill="#231C6B"/></svg><svg class="a" style="left:61px;top:57px" width="16" height="17" shape-rendering="crispEdges"><rect x="2" y="2" width="12" height="1" fill="#231C6B"/><rect x="1" y="3" width="1" height="1" fill="#231C6B"/><rect x="2" y="3" width="1" height="1" fill="#60D0FF"/><rect x="3" y="3" width="1" height="1" fill="#10A0FF"/><rect x="4" y="3" width="1" height="1" fill="#231C6B"/><rect x="5" y="3" width="6" height="1" fill="#DDF8FF"/><rect x="11" y="3" width="1" height="1" fill="#231C6B"/><rect x="12" y="3" width="1" height="1" fill="#10A0FF"/><rect x="13" y="3" width="1" height="1" fill="#60D0FF"/><rect x="14" y="3" width="1" height="1" fill="#231C6B"/><rect x="1" y="4" width="1" height="1" fill="#231C6B"/><rect x="2" y="4" width="2" height="1" fill="#10A0FF"/><rect x="4" y="4" width="1" height="1" fill="#231C6B"/><rect x="5" y="4" width="6" height="1" fill="#DDF8FF"/><rect x="11" y="4" width="1" height="1" fill="#231C6B"/><rect x="12" y="4" width="2" height="1" fill="#10A0FF"/><rect x="14" y="4" width="1" height="1" fill="#231C6B"/><rect x="1" y="5" width="1" height="1" fill="#231C6B"/><rect x="2" y="5" width="2" height="1" fill="#10A0FF"/><rect x="4" y="5" width="1" height="1" fill="#231C6B"/><rect x="5" y="5" width="6" height="1" fill="#DDF8FF"/><rect x="11" y="5" width="1" height="1" fill="#231C6B"/><rect x="12" y="5" width="2" height="1" fill="#10A0FF"/><rect x="14" y="5" width="1" height="1" fill="#231C6B"/><rect x="1" y="6" width="1" height="1" fill="#231C6B"/><rect x="2" y="6" width="2" height="1" fill="#10A0FF"/><rect x="4" y="6" width="1" height="1" fill="#231C6B"/><rect x="5" y="6" width="6" height="1" fill="#DDF8FF"/><rect x="11" y="6" width="1" height="1" fill="#231C6B"/><rect x="12" y="6" width="2" height="1" fill="#10A0FF"/><rect x="14" y="6" width="1" height="1" fill="#231C6B"/><rect x="1" y="7" width="1" height="1" fill="#231C6B"/><rect x="2" y="7" width="2" height="1" fill="#10A0FF"/><rect x="4" y="7" width="1" height="1" fill="#231C6B"/><rect x="5" y="7" width="6" height="1" fill="#DDF8FF"/><rect x="11" y="7" width="1" height="1" fill="#231C6B"/><rect x="12" y="7" width="2" height="1" fill="#10A0FF"/><rect x="14" y="7" width="1" height="1" fill="#231C6B"/><rect x="1" y="8" width="1" height="1" fill="#231C6B"/><rect x="2" y="8" width="2" height="1" fill="#10A0FF"/><rect x="4" y="8" width="8" height="1" fill="#231C6B"/><rect x="12" y="8" width="2" height="1" fill="#10A0FF"/><rect x="14" y="8" width="1" height="1" fill="#231C6B"/><rect x="1" y="9" width="1" height="1" fill="#231C6B"/><rect x="2" y="9" width="12" height="1" fill="#10A0FF"/><rect x="14" y="9" width="1" height="1" fill="#231C6B"/><rect x="1" y="10" width="1" height="1" fill="#231C6B"/><rect x="2" y="10" width="12" height="1" fill="#10A0FF"/><rect x="14" y="10" width="1" height="1" fill="#231C6B"/><rect x="1" y="11" width="1" height="1" fill="#231C6B"/><rect x="2" y="11" width="2" height="1" fill="#10A0FF"/><rect x="4" y="11" width="8" height="1" fill="#231C6B"/><rect x="12" y="11" width="2" height="1" fill="#10A0FF"/><rect x="14" y="11" width="1" height="1" fill="#231C6B"/><rect x="1" y="12" width="1" height="1" fill="#231C6B"/><rect x="2" y="12" width="2" height="1" fill="#10A0FF"/><rect x="4" y="12" width="1" height="1" fill="#231C6B"/><rect x="5" y="12" width="1" height="1" fill="#D8D8D8"/><rect x="6" y="12" width="5" height="1" fill="#F4F4F4"/><rect x="11" y="12" width="1" height="1" fill="#231C6B"/><rect x="12" y="12" width="2" height="1" fill="#10A0FF"/><rect x="14" y="12" width="1" height="1" fill="#231C6B"/><rect x="1" y="13" width="1" height="1" fill="#231C6B"/><rect x="2" y="13" width="2" height="1" fill="#10A0FF"/><rect x="4" y="13" width="1" height="1" fill="#231C6B"/><rect x="5" y="13" width="1" height="1" fill="#D8D8D8"/><rect x="6" y="13" width="5" height="1" fill="#F4F4F4"/><rect x="11" y="13" width="1" height="1" fill="#231C6B"/><rect x="12" y="13" width="2" height="1" fill="#10A0FF"/><rect x="14" y="13" width="1" height="1" fill="#231C6B"/><rect x="2" y="14" width="1" height="1" fill="#231C6B"/><rect x="3" y="14" width="1" height="1" fill="#10A0FF"/><rect x="4" y="14" width="1" height="1" fill="#231C6B"/><rect x="5" y="14" width="6" height="1" fill="#D8D8D8"/><rect x="11" y="14" width="1" height="1" fill="#231C6B"/><rect x="12" y="14" width="2" height="1" fill="#10A0FF"/><rect x="14" y="14" width="1" height="1" fill="#231C6B"/><rect x="3" y="15" width="11" height="1" fill="#231C6B"/></svg><svg class="a" style="left:111px;top:57px" width="16" height="17" shape-rendering="crispEdges"><rect x="3" y="2" width="12" height="1" fill="#0A0A6A"/><rect x="2" y="3" width="1" height="1" fill="#0A0A6A"/><rect x="3" y="3" width="6" height="1" fill="#F0F0FF"/><rect x="9" y="3" width="1" height="1" fill="#0A0A6A"/><rect x="10" y="3" width="5" height="1" fill="#F0F0FF"/><rect x="15" y="3" width="1" height="1" fill="#0A0A6A"/><rect x="2" y="4" width="1" height="1" fill="#0A0A6A"/><rect x="3" y="4" width="1" height="1" fill="#F0F0FF"/><rect x="4" y="4" width="4" height="1" fill="#C8C8F8"/><rect x="8" y="4" width="3" height="1" fill="#0A0A6A"/><rect x="11" y="4" width="4" height="1" fill="#C8C8F8"/><rect x="15" y="4" width="1" height="1" fill="#0A0A6A"/><rect x="2" y="5" width="1" height="1" fill="#0A0A6A"/><rect x="3" y="5" width="1" height="1" fill="#F0F0FF"/><rect x="4" y="5" width="5" height="1" fill="#C8C8F8"/><rect x="9" y="5" width="1" height="1" fill="#0A0A6A"/><rect x="10" y="5" width="5" height="1" fill="#C8C8F8"/><rect x="15" y="5" width="1" height="1" fill="#0A0A6A"/><rect x="2" y="6" width="2" height="1" fill="#0A0A6A"/><rect x="4" y="6" width="5" height="1" fill="#C8C8F8"/><rect x="9" y="6" width="1" height="1" fill="#0A0A6A"/><rect x="10" y="6" width="4" height="1" fill="#C8C8F8"/><rect x="14" y="6" width="2" height="1" fill="#0A0A6A"/><rect x="2" y="7" width="14" height="1" fill="#0A0A6A"/><rect x="2" y="8" width="2" height="1" fill="#0A0A6A"/><rect x="4" y="8" width="5" height="1" fill="#C8C8F8"/><rect x="9" y="8" width="1" height="1" fill="#0A0A6A"/><rect x="10" y="8" width="4" height="1" fill="#C8C8F8"/><rect x="14" y="8" width="2" height="1" fill="#0A0A6A"/><rect x="2" y="9" width="1" height="1" fill="#0A0A6A"/><rect x="3" y="9" width="1" height="1" fill="#F0F0FF"/><rect x="4" y="9" width="5" height="1" fill="#C8C8F8"/><rect x="9" y="9" width="1" height="1" fill="#0A0A6A"/><rect x="10" y="9" width="5" height="1" fill="#C8C8F8"/><rect x="15" y="9" width="1" height="1" fill="#0A0A6A"/><rect x="2" y="10" width="1" height="1" fill="#0A0A6A"/><rect x="3" y="10" width="1" height="1" fill="#F0F0FF"/><rect x="4" y="10" width="5" height="1" fill="#C8C8F8"/><rect x="9" y="10" width="1" height="1" fill="#0A0A6A"/><rect x="10" y="10" width="5" height="1" fill="#C8C8F8"/><rect x="15" y="10" width="1" height="1" fill="#0A0A6A"/><rect x="2" y="11" width="1" height="1" fill="#0A0A6A"/><rect x="3" y="11" width="1" height="1" fill="#F0F0FF"/><rect x="4" y="11" width="4" height="1" fill="#C8C8F8"/><rect x="8" y="11" width="3" height="1" fill="#0A0A6A"/><rect x="11" y="11" width="4" height="1" fill="#C8C8F8"/><rect x="15" y="11" width="1" height="1" fill="#0A0A6A"/><rect x="2" y="12" width="1" height="1" fill="#0A0A6A"/><rect x="3" y="12" width="1" height="1" fill="#F0F0FF"/><rect x="4" y="12" width="5" height="1" fill="#C8C8F8"/><rect x="9" y="12" width="1" height="1" fill="#0A0A6A"/><rect x="10" y="12" width="5" height="1" fill="#C8C8F8"/><rect x="15" y="12" width="1" height="1" fill="#0A0A6A"/><rect x="2" y="13" width="1" height="1" fill="#0A0A6A"/><rect x="3" y="13" width="6" height="1" fill="#C8C8F8"/><rect x="9" y="13" width="1" height="1" fill="#0A0A6A"/><rect x="10" y="13" width="5" height="1" fill="#C8C8F8"/><rect x="15" y="13" width="1" height="1" fill="#0A0A6A"/><rect x="3" y="14" width="12" height="1" fill="#0A0A6A"/></svg><svg class="a" style="left:133px;top:57px" width="16" height="17" shape-rendering="crispEdges"><rect x="5" y="2" width="4" height="1" fill="#0A0A6A"/><rect x="4" y="3" width="1" height="1" fill="#0A0A6A"/><rect x="5" y="3" width="4" height="1" fill="#FFFFFF"/><rect x="9" y="3" width="1" height="1" fill="#0A0A6A"/><rect x="3" y="4" width="1" height="1" fill="#0A0A6A"/><rect x="4" y="4" width="2" height="1" fill="#FFFFFF"/><rect x="6" y="4" width="2" height="1" fill="#0A0A6A"/><rect x="8" y="4" width="2" height="1" fill="#FFFFFF"/><rect x="10" y="4" width="1" height="1" fill="#0A0A6A"/><rect x="2" y="5" width="1" height="1" fill="#0A0A6A"/><rect x="3" y="5" width="1" height="1" fill="#FFFFFF"/><rect x="4" y="5" width="1" height="1" fill="#D8D8F8"/><rect x="5" y="5" width="1" height="1" fill="#FFFFFF"/><rect x="6" y="5" width="2" height="1" fill="#0A0A6A"/><rect x="8" y="5" width="1" height="1" fill="#FFFFFF"/><rect x="9" y="5" width="1" height="1" fill="#D8D8F8"/><rect x="10" y="5" width="1" height="1" fill="#FFFFFF"/><rect x="11" y="5" width="1" height="1" fill="#0A0A6A"/><rect x="2" y="6" width="1" height="1" fill="#0A0A6A"/><rect x="3" y="6" width="1" height="1" fill="#FFFFFF"/><rect x="4" y="6" width="6" height="1" fill="#0A0A6A"/><rect x="10" y="6" width="1" height="1" fill="#FFFFFF"/><rect x="11" y="6" width="1" height="1" fill="#0A0A6A"/><rect x="2" y="7" width="1" height="1" fill="#0A0A6A"/><rect x="3" y="7" width="1" height="1" fill="#FFFFFF"/><rect x="4" y="7" width="6" height="1" fill="#0A0A6A"/><rect x="10" y="7" width="1" height="1" fill="#FFFFFF"/><rect x="11" y="7" width="1" height="1" fill="#0A0A6A"/><rect x="2" y="8" width="1" height="1" fill="#0A0A6A"/><rect x="3" y="8" width="1" height="1" fill="#FFFFFF"/><rect x="4" y="8" width="1" height="1" fill="#D8D8F8"/><rect x="5" y="8" width="1" height="1" fill="#FFFFFF"/><rect x="6" y="8" width="2" height="1" fill="#0A0A6A"/><rect x="8" y="8" width="1" height="1" fill="#FFFFFF"/><rect x="9" y="8" width="1" height="1" fill="#D8D8F8"/><rect x="10" y="8" width="1" height="1" fill="#FFFFFF"/><rect x="11" y="8" width="1" height="1" fill="#0A0A6A"/><rect x="3" y="9" width="1" height="1" fill="#0A0A6A"/><rect x="4" y="9" width="2" height="1" fill="#FFFFFF"/><rect x="6" y="9" width="2" height="1" fill="#0A0A6A"/><rect x="8" y="9" width="2" height="1" fill="#FFFFFF"/><rect x="10" y="9" width="2" height="1" fill="#0A0A6A"/><rect x="4" y="10" width="1" height="1" fill="#0A0A6A"/><rect x="5" y="10" width="4" height="1" fill="#FFFFFF"/><rect x="9" y="10" width="4" height="1" fill="#0A0A6A"/><rect x="5" y="11" width="4" height="1" fill="#0A0A6A"/><rect x="11" y="11" width="3" height="1" fill="#0A0A6A"/><rect x="12" y="12" width="3" height="1" fill="#0A0A6A"/><rect x="13" y="13" width="2" height="1" fill="#0A0A6A"/></svg><svg class="a" style="left:155px;top:57px" width="16" height="17" shape-rendering="crispEdges"><rect x="5" y="2" width="4" height="1" fill="#0A0A6A"/><rect x="4" y="3" width="1" height="1" fill="#0A0A6A"/><rect x="5" y="3" width="4" height="1" fill="#FFFFFF"/><rect x="9" y="3" width="1" height="1" fill="#0A0A6A"/><rect x="3" y="4" width="1" height="1" fill="#0A0A6A"/><rect x="4" y="4" width="2" height="1" fill="#FFFFFF"/><rect x="6" y="4" width="2" height="1" fill="#D8D8F8"/><rect x="8" y="4" width="2" height="1" fill="#FFFFFF"/><rect x="10" y="4" width="1" height="1" fill="#0A0A6A"/><rect x="2" y="5" width="1" height="1" fill="#0A0A6A"/><rect x="3" y="5" width="1" height="1" fill="#FFFFFF"/><rect x="4" y="5" width="1" height="1" fill="#D8D8F8"/><rect x="5" y="5" width="4" height="1" fill="#FFFFFF"/><rect x="9" y="5" width="1" height="1" fill="#D8D8F8"/><rect x="10" y="5" width="1" height="1" fill="#FFFFFF"/><rect x="11" y="5" width="1" height="1" fill="#0A0A6A"/><rect x="2" y="6" width="1" height="1" fill="#0A0A6A"/><rect x="3" y="6" width="1" height="1" fill="#FFFFFF"/><rect x="4" y="6" width="6" height="1" fill="#0A0A6A"/><rect x="10" y="6" width="1" height="1" fill="#FFFFFF"/><rect x="11" y="6" width="1" height="1" fill="#0A0A6A"/><rect x="2" y="7" width="1" height="1" fill="#0A0A6A"/><rect x="3" y="7" width="1" height="1" fill="#FFFFFF"/><rect x="4" y="7" width="6" height="1" fill="#0A0A6A"/><rect x="10" y="7" width="1" height="1" fill="#FFFFFF"/><rect x="11" y="7" width="1" height="1" fill="#0A0A6A"/><rect x="2" y="8" width="1" height="1" fill="#0A0A6A"/><rect x="3" y="8" width="1" height="1" fill="#FFFFFF"/><rect x="4" y="8" width="1" height="1" fill="#D8D8F8"/><rect x="5" y="8" width="4" height="1" fill="#FFFFFF"/><rect x="9" y="8" width="1" height="1" fill="#D8D8F8"/><rect x="10" y="8" width="1" height="1" fill="#FFFFFF"/><rect x="11" y="8" width="1" height="1" fill="#0A0A6A"/><rect x="3" y="9" width="1" height="1" fill="#0A0A6A"/><rect x="4" y="9" width="2" height="1" fill="#FFFFFF"/><rect x="6" y="9" width="2" height="1" fill="#D8D8F8"/><rect x="8" y="9" width="2" height="1" fill="#FFFFFF"/><rect x="10" y="9" width="2" height="1" fill="#0A0A6A"/><rect x="4" y="10" width="1" height="1" fill="#0A0A6A"/><rect x="5" y="10" width="4" height="1" fill="#FFFFFF"/><rect x="9" y="10" width="4" height="1" fill="#0A0A6A"/><rect x="5" y="11" width="4" height="1" fill="#0A0A6A"/><rect x="11" y="11" width="3" height="1" fill="#0A0A6A"/><rect x="12" y="12" width="3" height="1" fill="#0A0A6A"/><rect x="13" y="13" width="2" height="1" fill="#0A0A6A"/></svg><svg class="a" style="left:206px;top:57px" width="16" height="17" shape-rendering="crispEdges"><rect x="5" y="2" width="10" height="1" fill="#1C1C6C"/><rect x="5" y="3" width="1" height="1" fill="#1C1C6C"/><rect x="6" y="3" width="8" height="1" fill="#FFFFFF"/><rect x="14" y="3" width="1" height="1" fill="#1C1C6C"/><rect x="5" y="4" width="1" height="1" fill="#1C1C6C"/><rect x="6" y="4" width="1" height="1" fill="#FFFFFF"/><rect x="7" y="4" width="6" height="1" fill="#C8C870"/><rect x="13" y="4" width="1" height="1" fill="#FFFFFF"/><rect x="14" y="4" width="1" height="1" fill="#1C1C6C"/><rect x="5" y="5" width="4" height="1" fill="#1C1C6C"/><rect x="9" y="5" width="5" height="1" fill="#FFFFFF"/><rect x="14" y="5" width="1" height="1" fill="#1C1C6C"/><rect x="4" y="6" width="1" height="1" fill="#1C1C6C"/><rect x="5" y="6" width="4" height="1" fill="#FF9C00"/><rect x="9" y="6" width="1" height="1" fill="#1C1C6C"/><rect x="10" y="6" width="3" height="1" fill="#C8C870"/><rect x="13" y="6" width="1" height="1" fill="#FFFFFF"/><rect x="14" y="6" width="1" height="1" fill="#1C1C6C"/><rect x="3" y="7" width="1" height="1" fill="#1C1C6C"/><rect x="4" y="7" width="2" height="1" fill="#FF9C00"/><rect x="6" y="7" width="2" height="1" fill="#1C1C6C"/><rect x="8" y="7" width="2" height="1" fill="#FF9C00"/><rect x="10" y="7" width="1" height="1" fill="#1C1C6C"/><rect x="11" y="7" width="2" height="1" fill="#C8C870"/><rect x="13" y="7" width="1" height="1" fill="#FFFFFF"/><rect x="14" y="7" width="1" height="1" fill="#1C1C6C"/><rect x="3" y="8" width="1" height="1" fill="#1C1C6C"/><rect x="4" y="8" width="1" height="1" fill="#FF9C00"/><rect x="5" y="8" width="1" height="1" fill="#1C1C6C"/><rect x="7" y="8" width="3" height="1" fill="#1C1C6C"/><rect x="10" y="8" width="3" height="1" fill="#C8C870"/><rect x="13" y="8" width="1" height="1" fill="#FFFFFF"/><rect x="14" y="8" width="1" height="1" fill="#1C1C6C"/><rect x="2" y="9" width="1" height="1" fill="#1C1C6C"/><rect x="3" y="9" width="2" height="1" fill="#FF9C00"/><rect x="5" y="9" width="1" height="1" fill="#1C1C6C"/><rect x="6" y="9" width="8" height="1" fill="#FFFFFF"/><rect x="14" y="9" width="1" height="1" fill="#1C1C6C"/><rect x="1" y="10" width="1" height="1" fill="#1C1C6C"/><rect x="2" y="10" width="4" height="1" fill="#FF9C00"/><rect x="6" y="10" width="1" height="1" fill="#1C1C6C"/><rect x="7" y="10" width="6" height="1" fill="#C8C870"/><rect x="13" y="10" width="1" height="1" fill="#FFFFFF"/><rect x="14" y="10" width="1" height="1" fill="#1C1C6C"/><rect x="2" y="11" width="1" height="1" fill="#1C1C6C"/><rect x="3" y="11" width="2" height="1" fill="#FF9C00"/><rect x="5" y="11" width="1" height="1" fill="#1C1C6C"/><rect x="6" y="11" width="8" height="1" fill="#FFFFFF"/><rect x="14" y="11" width="1" height="1" fill="#1C1C6C"/><rect x="3" y="12" width="2" height="1" fill="#1C1C6C"/><rect x="5" y="12" width="1" height="1" fill="#FFFFFF"/><rect x="6" y="12" width="7" height="1" fill="#C8C870"/><rect x="13" y="12" width="1" height="1" fill="#FFFFFF"/><rect x="14" y="12" width="1" height="1" fill="#1C1C6C"/><rect x="5" y="13" width="1" height="1" fill="#1C1C6C"/><rect x="6" y="13" width="8" height="1" fill="#FFFFFF"/><rect x="14" y="13" width="1" height="1" fill="#1C1C6C"/><rect x="5" y="14" width="1" height="1" fill="#1C1C6C"/><rect x="6" y="14" width="8" height="1" fill="#FFFFFF"/><rect x="14" y="14" width="1" height="1" fill="#1C1C6C"/><rect x="5" y="15" width="10" height="1" fill="#1C1C6C"/></svg><svg class="a" style="left:479px;top:57px" width="16" height="17" shape-rendering="crispEdges"><rect x="3" y="2" width="9" height="1" fill="#1C1C5C"/><rect x="2" y="3" width="2" height="1" fill="#1C1C5C"/><rect x="4" y="3" width="8" height="1" fill="#FFFFFF"/><rect x="12" y="3" width="1" height="1" fill="#1C1C5C"/><rect x="4" y="4" width="1" height="1" fill="#1C1C5C"/><rect x="5" y="4" width="7" height="1" fill="#FFFFFF"/><rect x="12" y="4" width="1" height="1" fill="#1C1C5C"/><rect x="4" y="5" width="1" height="1" fill="#1C1C5C"/><rect x="5" y="5" width="1" height="1" fill="#FFFFFF"/><rect x="6" y="5" width="1" height="1" fill="#0000FF"/><rect x="7" y="5" width="1" height="1" fill="#FFFFFF"/><rect x="8" y="5" width="1" height="1" fill="#0000FF"/><rect x="9" y="5" width="1" height="1" fill="#FFFFFF"/><rect x="10" y="5" width="2" height="1" fill="#0000FF"/><rect x="12" y="5" width="1" height="1" fill="#1C1C5C"/><rect x="4" y="6" width="1" height="1" fill="#1C1C5C"/><rect x="5" y="6" width="7" height="1" fill="#FFFFFF"/><rect x="12" y="6" width="1" height="1" fill="#1C1C5C"/><rect x="4" y="7" width="1" height="1" fill="#1C1C5C"/><rect x="5" y="7" width="1" height="1" fill="#FFFFFF"/><rect x="6" y="7" width="1" height="1" fill="#0000FF"/><rect x="7" y="7" width="1" height="1" fill="#FFFFFF"/><rect x="8" y="7" width="1" height="1" fill="#0000FF"/><rect x="9" y="7" width="1" height="1" fill="#FFFFFF"/><rect x="10" y="7" width="1" height="1" fill="#0000FF"/><rect x="11" y="7" width="1" height="1" fill="#FFFFFF"/><rect x="12" y="7" width="1" height="1" fill="#1C1C5C"/><rect x="4" y="8" width="1" height="1" fill="#1C1C5C"/><rect x="5" y="8" width="7" height="1" fill="#FFFFFF"/><rect x="12" y="8" width="1" height="1" fill="#1C1C5C"/><rect x="4" y="9" width="1" height="1" fill="#1C1C5C"/><rect x="5" y="9" width="1" height="1" fill="#FFFFFF"/><rect x="6" y="9" width="2" height="1" fill="#0000FF"/><rect x="8" y="9" width="1" height="1" fill="#FFFFFF"/><rect x="9" y="9" width="1" height="1" fill="#0000FF"/><rect x="10" y="9" width="1" height="1" fill="#FFFFFF"/><rect x="11" y="9" width="1" height="1" fill="#0000FF"/><rect x="12" y="9" width="1" height="1" fill="#1C1C5C"/><rect x="4" y="10" width="1" height="1" fill="#1C1C5C"/><rect x="5" y="10" width="7" height="1" fill="#FFFFFF"/><rect x="12" y="10" width="1" height="1" fill="#1C1C5C"/><rect x="4" y="11" width="1" height="1" fill="#1C1C5C"/><rect x="5" y="11" width="1" height="1" fill="#FFFFFF"/><rect x="6" y="11" width="2" height="1" fill="#0000FF"/><rect x="8" y="11" width="1" height="1" fill="#FFFFFF"/><rect x="9" y="11" width="1" height="1" fill="#0000FF"/><rect x="10" y="11" width="1" height="1" fill="#FFFFFF"/><rect x="11" y="11" width="1" height="1" fill="#0000FF"/><rect x="12" y="11" width="1" height="1" fill="#1C1C5C"/><rect x="4" y="12" width="1" height="1" fill="#1C1C5C"/><rect x="5" y="12" width="7" height="1" fill="#FFFFFF"/><rect x="12" y="12" width="1" height="1" fill="#1C1C5C"/><rect x="4" y="13" width="12" height="1" fill="#1C1C5C"/><rect x="5" y="14" width="1" height="1" fill="#1C1C5C"/><rect x="6" y="14" width="8" height="1" fill="#D8D8D8"/><rect x="14" y="14" width="1" height="1" fill="#1C1C5C"/><rect x="6" y="15" width="8" height="1" fill="#1C1C5C"/></svg><svg class="a" style="left:501px;top:57px" width="16" height="17" shape-rendering="crispEdges"><rect x="3" y="2" width="9" height="1" fill="#1C1C5C"/><rect x="2" y="3" width="2" height="1" fill="#1C1C5C"/><rect x="4" y="3" width="8" height="1" fill="#FFFFFF"/><rect x="12" y="3" width="1" height="1" fill="#1C1C5C"/><rect x="4" y="4" width="1" height="1" fill="#1C1C5C"/><rect x="5" y="4" width="7" height="1" fill="#FFFFFF"/><rect x="12" y="4" width="1" height="1" fill="#1C1C5C"/><rect x="2" y="5" width="13" height="1" fill="#1C1C5C"/><rect x="2" y="6" width="1" height="1" fill="#1C1C5C"/><rect x="3" y="6" width="11" height="1" fill="#D0D0FF"/><rect x="14" y="6" width="1" height="1" fill="#1C1C5C"/><rect x="2" y="7" width="1" height="1" fill="#1C1C5C"/><rect x="3" y="7" width="3" height="1" fill="#D0D0FF"/><rect x="6" y="7" width="1" height="1" fill="#0000FF"/><rect x="7" y="7" width="1" height="1" fill="#D0D0FF"/><rect x="8" y="7" width="1" height="1" fill="#0000FF"/><rect x="9" y="7" width="1" height="1" fill="#D0D0FF"/><rect x="10" y="7" width="2" height="1" fill="#0000FF"/><rect x="12" y="7" width="2" height="1" fill="#D0D0FF"/><rect x="14" y="7" width="1" height="1" fill="#1C1C5C"/><rect x="2" y="8" width="1" height="1" fill="#1C1C5C"/><rect x="3" y="8" width="11" height="1" fill="#D0D0FF"/><rect x="14" y="8" width="1" height="1" fill="#1C1C5C"/><rect x="2" y="9" width="1" height="1" fill="#1C1C5C"/><rect x="3" y="9" width="3" height="1" fill="#D0D0FF"/><rect x="6" y="9" width="2" height="1" fill="#0000FF"/><rect x="8" y="9" width="1" height="1" fill="#D0D0FF"/><rect x="9" y="9" width="1" height="1" fill="#0000FF"/><rect x="10" y="9" width="1" height="1" fill="#D0D0FF"/><rect x="11" y="9" width="1" height="1" fill="#0000FF"/><rect x="12" y="9" width="2" height="1" fill="#D0D0FF"/><rect x="14" y="9" width="1" height="1" fill="#1C1C5C"/><rect x="2" y="10" width="13" height="1" fill="#1C1C5C"/><rect x="4" y="11" width="1" height="1" fill="#1C1C5C"/><rect x="5" y="11" width="1" height="1" fill="#FFFFFF"/><rect x="6" y="11" width="2" height="1" fill="#0000FF"/><rect x="8" y="11" width="1" height="1" fill="#FFFFFF"/><rect x="9" y="11" width="1" height="1" fill="#0000FF"/><rect x="10" y="11" width="1" height="1" fill="#FFFFFF"/><rect x="11" y="11" width="1" height="1" fill="#0000FF"/><rect x="12" y="11" width="1" height="1" fill="#1C1C5C"/><rect x="4" y="12" width="1" height="1" fill="#1C1C5C"/><rect x="5" y="12" width="7" height="1" fill="#FFFFFF"/><rect x="12" y="12" width="1" height="1" fill="#1C1C5C"/><rect x="4" y="13" width="12" height="1" fill="#1C1C5C"/><rect x="5" y="14" width="1" height="1" fill="#1C1C5C"/><rect x="6" y="14" width="8" height="1" fill="#D8D8D8"/><rect x="14" y="14" width="1" height="1" fill="#1C1C5C"/><rect x="6" y="15" width="8" height="1" fill="#1C1C5C"/></svg><svg class="a" style="left:523px;top:57px" width="16" height="17" shape-rendering="crispEdges"><rect x="3" y="2" width="9" height="1" fill="#1C1C5C"/><rect x="2" y="3" width="2" height="1" fill="#1C1C5C"/><rect x="4" y="3" width="8" height="1" fill="#FFFFFF"/><rect x="12" y="3" width="1" height="1" fill="#1C1C5C"/><rect x="13" y="3" width="1" height="1" fill="#000040"/><rect x="4" y="4" width="1" height="1" fill="#1C1C5C"/><rect x="5" y="4" width="7" height="1" fill="#FFFFFF"/><rect x="12" y="4" width="1" height="1" fill="#1C1C5C"/><rect x="13" y="4" width="1" height="1" fill="#80F0FF"/><rect x="14" y="4" width="1" height="1" fill="#1C1C5C"/><rect x="4" y="5" width="1" height="1" fill="#1C1C5C"/><rect x="5" y="5" width="1" height="1" fill="#FFFFFF"/><rect x="6" y="5" width="1" height="1" fill="#0000FF"/><rect x="7" y="5" width="1" height="1" fill="#FFFFFF"/><rect x="8" y="5" width="1" height="1" fill="#0000FF"/><rect x="9" y="5" width="1" height="1" fill="#FFFFFF"/><rect x="10" y="5" width="2" height="1" fill="#0000FF"/><rect x="12" y="5" width="1" height="1" fill="#1C1C5C"/><rect x="13" y="5" width="1" height="1" fill="#80F0FF"/><rect x="14" y="5" width="1" height="1" fill="#1C1C5C"/><rect x="4" y="6" width="1" height="1" fill="#1C1C5C"/><rect x="5" y="6" width="7" height="1" fill="#FFFFFF"/><rect x="12" y="6" width="1" height="1" fill="#1C1C5C"/><rect x="13" y="6" width="1" height="1" fill="#80F0FF"/><rect x="14" y="6" width="1" height="1" fill="#1C1C5C"/><rect x="4" y="7" width="1" height="1" fill="#1C1C5C"/><rect x="5" y="7" width="1" height="1" fill="#FFFFFF"/><rect x="6" y="7" width="1" height="1" fill="#0000FF"/><rect x="7" y="7" width="1" height="1" fill="#FFFFFF"/><rect x="8" y="7" width="1" height="1" fill="#0000FF"/><rect x="9" y="7" width="2" height="1" fill="#000040"/><rect x="11" y="7" width="1" height="1" fill="#FFFFFF"/><rect x="12" y="7" width="1" height="1" fill="#1C1C5C"/><rect x="13" y="7" width="1" height="1" fill="#80F0FF"/><rect x="14" y="7" width="1" height="1" fill="#1C1C5C"/><rect x="4" y="8" width="1" height="1" fill="#1C1C5C"/><rect x="5" y="8" width="3" height="1" fill="#FFFFFF"/><rect x="8" y="8" width="1" height="1" fill="#000040"/><rect x="9" y="8" width="1" height="1" fill="#80F0FF"/><rect x="10" y="8" width="3" height="1" fill="#000040"/><rect x="13" y="8" width="1" height="1" fill="#80F0FF"/><rect x="14" y="8" width="1" height="1" fill="#1C1C5C"/><rect x="4" y="9" width="1" height="1" fill="#1C1C5C"/><rect x="5" y="9" width="1" height="1" fill="#FFFFFF"/><rect x="6" y="9" width="1" height="1" fill="#0000FF"/><rect x="7" y="9" width="1" height="1" fill="#000040"/><rect x="8" y="9" width="5" height="1" fill="#80F0FF"/><rect x="13" y="9" width="1" height="1" fill="#000040"/><rect x="14" y="9" width="1" height="1" fill="#1C1C5C"/><rect x="4" y="10" width="1" height="1" fill="#1C1C5C"/><rect x="5" y="10" width="3" height="1" fill="#FFFFFF"/><rect x="8" y="10" width="1" height="1" fill="#000040"/><rect x="9" y="10" width="1" height="1" fill="#80F0FF"/><rect x="10" y="10" width="3" height="1" fill="#000040"/><rect x="13" y="10" width="1" height="1" fill="#1C1C5C"/><rect x="4" y="11" width="1" height="1" fill="#1C1C5C"/><rect x="5" y="11" width="1" height="1" fill="#FFFFFF"/><rect x="6" y="11" width="2" height="1" fill="#0000FF"/><rect x="8" y="11" width="1" height="1" fill="#FFFFFF"/><rect x="9" y="11" width="1" height="1" fill="#000040"/><rect x="10" y="11" width="1" height="1" fill="#FFFFFF"/><rect x="11" y="11" width="1" height="1" fill="#0000FF"/><rect x="12" y="11" width="1" height="1" fill="#1C1C5C"/><rect x="4" y="12" width="1" height="1" fill="#1C1C5C"/><rect x="5" y="12" width="7" height="1" fill="#FFFFFF"/><rect x="12" y="12" width="1" height="1" fill="#1C1C5C"/><rect x="4" y="13" width="12" height="1" fill="#1C1C5C"/><rect x="5" y="14" width="1" height="1" fill="#1C1C5C"/><rect x="6" y="14" width="8" height="1" fill="#D8D8D8"/><rect x="14" y="14" width="1" height="1" fill="#1C1C5C"/><rect x="6" y="15" width="8" height="1" fill="#1C1C5C"/></svg><svg class="a" style="left:555px;top:57px" width="16" height="17" shape-rendering="crispEdges"><rect x="2" y="2" width="5" height="1" fill="#1C1C5C"/><rect x="13" y="2" width="1" height="1" fill="#1C1C5C"/><rect x="14" y="2" width="1" height="1" fill="#FFFFFF"/><rect x="15" y="2" width="1" height="1" fill="#1C1C5C"/><rect x="2" y="3" width="1" height="1" fill="#1C1C5C"/><rect x="3" y="3" width="1" height="1" fill="#10A0FF"/><rect x="4" y="3" width="2" height="1" fill="#FFFFFF"/><rect x="6" y="3" width="1" height="1" fill="#10A0FF"/><rect x="7" y="3" width="1" height="1" fill="#1C1C5C"/><rect x="13" y="3" width="1" height="1" fill="#1C1C5C"/><rect x="14" y="3" width="1" height="1" fill="#FFFFFF"/><rect x="15" y="3" width="1" height="1" fill="#1C1C5C"/><rect x="2" y="4" width="1" height="1" fill="#1C1C5C"/><rect x="3" y="4" width="4" height="1" fill="#10A0FF"/><rect x="7" y="4" width="1" height="1" fill="#1C1C5C"/><rect x="13" y="4" width="1" height="1" fill="#1C1C5C"/><rect x="14" y="4" width="1" height="1" fill="#FFFFFF"/><rect x="15" y="4" width="1" height="1" fill="#1C1C5C"/><rect x="2" y="5" width="1" height="1" fill="#1C1C5C"/><rect x="3" y="5" width="1" height="1" fill="#10A0FF"/><rect x="4" y="5" width="2" height="1" fill="#FFFFFF"/><rect x="6" y="5" width="1" height="1" fill="#10A0FF"/><rect x="7" y="5" width="1" height="1" fill="#1C1C5C"/><rect x="13" y="5" width="1" height="1" fill="#1C1C5C"/><rect x="14" y="5" width="1" height="1" fill="#FFFFFF"/><rect x="15" y="5" width="1" height="1" fill="#1C1C5C"/><rect x="3" y="6" width="4" height="1" fill="#1C1C5C"/><rect x="13" y="6" width="1" height="1" fill="#1C1C5C"/><rect x="14" y="6" width="1" height="1" fill="#FFFFFF"/><rect x="15" y="6" width="1" height="1" fill="#1C1C5C"/><rect x="12" y="7" width="1" height="1" fill="#1C1C5C"/><rect x="13" y="7" width="1" height="1" fill="#FFFFFF"/><rect x="14" y="7" width="1" height="1" fill="#1C1C5C"/><rect x="3" y="8" width="3" height="1" fill="#1C1C5C"/><rect x="10" y="8" width="3" height="1" fill="#1C1C5C"/><rect x="13" y="8" width="1" height="1" fill="#FFFFFF"/><rect x="14" y="8" width="1" height="1" fill="#1C1C5C"/><rect x="4" y="9" width="1" height="1" fill="#1C1C5C"/><rect x="5" y="9" width="1" height="1" fill="#FF0000"/><rect x="6" y="9" width="1" height="1" fill="#1C1C5C"/><rect x="10" y="9" width="1" height="1" fill="#1C1C5C"/><rect x="11" y="9" width="3" height="1" fill="#FFFFFF"/><rect x="14" y="9" width="1" height="1" fill="#1C1C5C"/><rect x="4" y="10" width="1" height="1" fill="#1C1C5C"/><rect x="5" y="10" width="1" height="1" fill="#FF0000"/><rect x="6" y="10" width="2" height="1" fill="#1C1C5C"/><rect x="10" y="10" width="1" height="1" fill="#1C1C5C"/><rect x="11" y="10" width="1" height="1" fill="#FFFFFF"/><rect x="12" y="10" width="3" height="1" fill="#1C1C5C"/><rect x="4" y="11" width="1" height="1" fill="#1C1C5C"/><rect x="5" y="11" width="3" height="1" fill="#FF0000"/><rect x="8" y="11" width="1" height="1" fill="#1C1C5C"/><rect x="10" y="11" width="1" height="1" fill="#1C1C5C"/><rect x="11" y="11" width="1" height="1" fill="#FFFFFF"/><rect x="12" y="11" width="1" height="1" fill="#1C1C5C"/><rect x="5" y="12" width="1" height="1" fill="#1C1C5C"/><rect x="6" y="12" width="10" height="1" fill="#FF0000"/><rect x="6" y="13" width="2" height="1" fill="#1C1C5C"/><rect x="8" y="13" width="1" height="1" fill="#FF0000"/><rect x="9" y="13" width="1" height="1" fill="#1C1C5C"/><rect x="11" y="13" width="1" height="1" fill="#1C1C5C"/><rect x="12" y="13" width="1" height="1" fill="#FFFFFF"/><rect x="13" y="13" width="1" height="1" fill="#1C1C5C"/><rect x="7" y="14" width="2" height="1" fill="#1C1C5C"/><rect x="11" y="14" width="1" height="1" fill="#1C1C5C"/><rect x="12" y="14" width="1" height="1" fill="#FFFFFF"/><rect x="13" y="14" width="1" height="1" fill="#1C1C5C"/><rect x="11" y="15" width="1" height="1" fill="#1C1C5C"/><rect x="12" y="15" width="1" height="1" fill="#FFFFFF"/><rect x="13" y="15" width="1" height="1" fill="#1C1C5C"/></svg><div class="t" style="left:447.07px;top:62px;font-size:10px;line-height:10px;font-weight:bold;color:#1F1A66;transform:scaleX(0.9333);transform-origin:0 0;">EIP</div><div class="a" style="left:4px;top:78px;width:382px;height:1px;background:#FFFFFF"></div><div class="a" style="left:4px;top:78px;width:1px;height:21px;background:#FFFFFF"></div><div class="a" style="left:386px;top:78px;width:1px;height:22px;background:#ACA899"></div><div class="a" style="left:4px;top:99px;width:383px;height:1px;background:#ACA899"></div><div class="a" style="left:7px;top:81px;width:3px;height:17px;background:#ACA899"></div><div class="a" style="left:7px;top:81px;width:2px;height:16px;background:#FFFFFF"></div><div class="a" style="left:8px;top:82px;width:1px;height:15px;background:#ECE9D8"></div><div class="a" style="left:10px;top:81px;width:3px;height:17px;background:#ACA899"></div><div class="a" style="left:10px;top:81px;width:2px;height:16px;background:#FFFFFF"></div><div class="a" style="left:11px;top:82px;width:1px;height:15px;background:#ECE9D8"></div><div class="a" style="left:162px;top:79px;width:28px;height:20px;background:#EEEBDD"></div><div class="t" style="left:20.00px;top:82px;font-size:13px;line-height:13px;font-weight:normal;color:#000;transform:scaleX(0.8421);transform-origin:0 0;">X =</div><div class="a" style="left:42px;top:79px;width:119px;height:20px;background:#FFFFFF"></div><div class="a" style="left:42px;top:79px;width:118px;height:19px;background:#ACA899"></div><div class="a" style="left:43px;top:80px;width:117px;height:18px;background:#F1EFE2"></div><div class="a" style="left:43px;top:80px;width:116px;height:17px;background:#716F64"></div><div class="a" style="left:44px;top:81px;width:115px;height:16px;background:#FFFFFF"></div><div class="t" style="left:46.00px;top:82px;font-size:13px;line-height:13px;font-weight:normal;color:#000;transform:scaleX(0.7955);transform-origin:0 0;">-4.0750</div><div class="t" style="left:168.00px;top:82px;font-size:13px;line-height:13px;font-weight:normal;color:#000;transform:scaleX(0.8421);transform-origin:0 0;">Y =</div><div class="a" style="left:190px;top:79px;width:119px;height:20px;background:#FFFFFF"></div><div class="a" style="left:190px;top:79px;width:118px;height:19px;background:#ACA899"></div><div class="a" style="left:191px;top:80px;width:117px;height:18px;background:#F1EFE2"></div><div class="a" style="left:191px;top:80px;width:116px;height:17px;background:#716F64"></div><div class="a" style="left:192px;top:81px;width:115px;height:16px;background:#FFFFFF"></div><div class="t" style="left:193.17px;top:82px;font-size:13px;line-height:13px;font-weight:normal;color:#000;transform:scaleX(0.8261);transform-origin:0 0;">68.2800</div><div class="a" style="left:317px;top:79px;width:68px;height:20px;background:#FFFFFF"></div><div class="a" style="left:317px;top:79px;width:67px;height:19px;background:#ACA899"></div><div class="a" style="left:318px;top:80px;width:66px;height:18px;background:#F1EFE2"></div><div class="a" style="left:318px;top:80px;width:65px;height:17px;background:#716F64"></div><div class="a" style="left:319px;top:81px;width:64px;height:16px;background:#FFFFFF"></div><div class="t" style="left:322.19px;top:82px;font-size:13px;line-height:13px;font-weight:normal;color:#000;transform:scaleX(0.8125);transform-origin:0 0;">um</div><div class="a" style="left:368px;top:81px;width:15px;height:16px;background:#716F64"></div><div class="a" style="left:368px;top:81px;width:14px;height:15px;background:#FFFFFF"></div><div class="a" style="left:369px;top:82px;width:13px;height:14px;background:#ACA899"></div><div class="a" style="left:369px;top:82px;width:12px;height:13px;background:#F1EFE2"></div><div class="a" style="left:370px;top:83px;width:11px;height:12px;background:#ECE9D8"></div><svg class="a" style="left:368px;top:81px" width="15" height="16" shape-rendering="crispEdges"><path d="M3 6h7v1h-1v1h-1v1h-1v1h-1v-1h-1v-1h-1v-1h-1z" fill="#000"/></svg><div class="a" style="left:4px;top:100px;width:179px;height:607px;background:#ACA899"></div><div class="a" style="left:4px;top:100px;width:178px;height:606px;background:#FFFFFF"></div><div class="a" style="left:5px;top:101px;width:177px;height:605px;background:#ECE9D8"></div><div class="a" style="left:183px;top:99px;width:1px;height:610px;background:#716F64"></div><div class="a" style="left:180px;top:100px;width:1px;height:606px;background:#FFFFFF"></div><div class="a" style="left:7px;top:107px;width:155px;height:3px;background:#ACA899"></div><div class="a" style="left:7px;top:107px;width:154px;height:2px;background:#FFFFFF"></div><div class="a" style="left:7px;top:110px;width:155px;height:3px;background:#ACA899"></div><div class="a" style="left:7px;top:110px;width:154px;height:2px;background:#FFFFFF"></div><div class="a" style="left:165px;top:103px;width:12px;height:12px;background:#716F64"></div><div class="a" style="left:165px;top:103px;width:11px;height:11px;background:#FFFFFF"></div><div class="a" style="left:166px;top:104px;width:10px;height:10px;background:#ACA899"></div><div class="a" style="left:166px;top:104px;width:9px;height:9px;background:#F1EFE2"></div><div class="a" style="left:167px;top:105px;width:8px;height:8px;background:#ECE9D8"></div><svg class="a" style="left:168px;top:106px" width="6" height="5" shape-rendering="crispEdges"><path d="M0 0h2v1h2v-1h2v1h-1v1h-1v1h1v1h1v1h-2v-1h-2v1h-2v-1h1v-1h1v-1h-1v-1h-1z" fill="#000"/></svg><div class="a" style="left:5px;top:119px;width:174px;height:587px;background:#FFFFFF"></div><div class="a" style="left:5px;top:119px;width:173px;height:586px;background:#ACA899"></div><div class="a" style="left:6px;top:120px;width:172px;height:585px;background:#ACA899"></div><div class="a" style="left:6px;top:120px;width:171px;height:584px;background:#FFFFFF"></div><div class="a" style="left:7px;top:121px;width:170px;height:583px;background:#ECE9D8"></div><div class="a" style="left:7px;top:154px;width:170px;height:550px;background:#FFFFFF"></div><div class="a" style="left:7px;top:154px;width:169px;height:549px;background:#ACA899"></div><div class="a" style="left:8px;top:155px;width:168px;height:548px;background:#F1EFE2"></div><div class="a" style="left:8px;top:155px;width:167px;height:547px;background:#716F64"></div><div class="a" style="left:9px;top:156px;width:166px;height:546px;background:#FFFFFF"></div><div class="a" style="left:9px;top:156px;width:80px;height:20px;background:#716F64"></div><div class="a" style="left:9px;top:156px;width:79px;height:19px;background:#FFFFFF"></div><div class="a" style="left:10px;top:157px;width:78px;height:18px;background:#ACA899"></div><div class="a" style="left:10px;top:157px;width:77px;height:17px;background:#F1EFE2"></div><div class="a" style="left:11px;top:158px;width:76px;height:16px;background:#ECE9D8"></div><div class="a" style="left:89px;top:156px;width:86px;height:20px;background:#716F64"></div><div class="a" style="left:89px;top:156px;width:85px;height:19px;background:#FFFFFF"></div><div class="a" style="left:90px;top:157px;width:84px;height:18px;background:#ACA899"></div><div class="a" style="left:90px;top:157px;width:83px;height:17px;background:#F1EFE2"></div><div class="a" style="left:91px;top:158px;width:82px;height:16px;background:#ECE9D8"></div><div class="t" style="left:13.21px;top:159px;font-size:13px;line-height:13px;font-weight:normal;color:#000;transform:scaleX(0.7917);transform-origin:0 0;">Property</div><div class="t" style="left:93.00px;top:159px;font-size:13px;line-height:13px;font-weight:normal;color:#000;transform:scaleX(0.8438);transform-origin:0 0;">Value</div><div class="a" style="left:184px;top:100px;width:781px;height:611px;background:#FFFFFF"></div><div class="a" style="left:184px;top:100px;width:780px;height:610px;background:#ACA899"></div><div class="a" style="left:185px;top:101px;width:779px;height:609px;background:#F1EFE2"></div><div class="a" style="left:185px;top:101px;width:778px;height:608px;background:#716F64"></div><div class="a" style="left:186px;top:102px;width:777px;height:607px;background:#FFFFFF"></div><div class="a" style="left:965px;top:99px;width:1px;height:608px;background:#FFFFFF"></div><div class="a" style="left:966px;top:99px;width:1px;height:608px;background:#F1EFE2"></div><svg class="a" style="left:186px;top:102px" width="760" height="590" shape-rendering="crispEdges"><g transform="translate(-186,-102)"><defs><pattern id="hatch" patternUnits="userSpaceOnUse" x="0" y="0" width="8" height="8"><rect x="1" y="0" width="1" height="1" fill="#5000FF"/><rect x="2" y="1" width="1" height="1" fill="#5000FF"/><rect x="3" y="2" width="1" height="1" fill="#5000FF"/><rect x="4" y="3" width="1" height="1" fill="#5000FF"/><rect x="5" y="4" width="1" height="1" fill="#5000FF"/><rect x="6" y="5" width="1" height="1" fill="#5000FF"/><rect x="7" y="6" width="1" height="1" fill="#5000FF"/><rect x="0" y="7" width="1" height="1" fill="#5000FF"/></pattern></defs><path d="M212 107h1v1h-1zM212 138h1v1h-1zM212 170h1v1h-1zM212 201h1v1h-1zM212 233h1v1h-1zM212 264h1v1h-1zM212 296h1v1h-1zM212 327h1v1h-1zM212 359h1v1h-1zM212 390h1v1h-1zM212 422h1v1h-1zM212 453h1v1h-1zM212 484h1v1h-1zM212 516h1v1h-1zM212 547h1v1h-1zM212 579h1v1h-1zM212 610h1v1h-1zM212 642h1v1h-1zM212 673h1v1h-1zM243 107h1v1h-1zM243 138h1v1h-1zM243 170h1v1h-1zM243 201h1v1h-1zM243 233h1v1h-1zM243 264h1v1h-1zM243 296h1v1h-1zM243 327h1v1h-1zM243 359h1v1h-1zM243 390h1v1h-1zM243 422h1v1h-1zM243 453h1v1h-1zM243 484h1v1h-1zM243 516h1v1h-1zM243 547h1v1h-1zM243 579h1v1h-1zM243 610h1v1h-1zM243 642h1v1h-1zM243 673h1v1h-1zM275 107h1v1h-1zM275 138h1v1h-1zM275 170h1v1h-1zM275 201h1v1h-1zM275 233h1v1h-1zM275 264h1v1h-1zM275 296h1v1h-1zM275 327h1v1h-1zM275 359h1v1h-1zM275 390h1v1h-1zM275 422h1v1h-1zM275 453h1v1h-1zM275 484h1v1h-1zM275 516h1v1h-1zM275 547h1v1h-1zM275 579h1v1h-1zM275 610h1v1h-1zM275 642h1v1h-1zM275 673h1v1h-1zM306 107h1v1h-1zM306 138h1v1h-1zM306 170h1v1h-1zM306 201h1v1h-1zM306 233h1v1h-1zM306 264h1v1h-1zM306 296h1v1h-1zM306 327h1v1h-1zM306 359h1v1h-1zM306 390h1v1h-1zM306 422h1v1h-1zM306 453h1v1h-1zM306 484h1v1h-1zM306 516h1v1h-1zM306 547h1v1h-1zM306 579h1v1h-1zM306 610h1v1h-1zM306 642h1v1h-1zM306 673h1v1h-1zM338 107h1v1h-1zM338 138h1v1h-1zM338 170h1v1h-1zM338 201h1v1h-1zM338 233h1v1h-1zM338 264h1v1h-1zM338 296h1v1h-1zM338 327h1v1h-1zM338 359h1v1h-1zM338 390h1v1h-1zM338 422h1v1h-1zM338 453h1v1h-1zM338 484h1v1h-1zM338 516h1v1h-1zM338 547h1v1h-1zM338 579h1v1h-1zM338 610h1v1h-1zM338 642h1v1h-1zM338 673h1v1h-1zM369 107h1v1h-1zM369 138h1v1h-1zM369 170h1v1h-1zM369 201h1v1h-1zM369 233h1v1h-1zM369 264h1v1h-1zM369 296h1v1h-1zM369 327h1v1h-1zM369 359h1v1h-1zM369 390h1v1h-1zM369 422h1v1h-1zM369 453h1v1h-1zM369 484h1v1h-1zM369 516h1v1h-1zM369 547h1v1h-1zM369 579h1v1h-1zM369 610h1v1h-1zM369 642h1v1h-1zM369 673h1v1h-1zM401 107h1v1h-1zM401 138h1v1h-1zM401 170h1v1h-1zM401 201h1v1h-1zM401 233h1v1h-1zM401 264h1v1h-1zM401 296h1v1h-1zM401 327h1v1h-1zM401 359h1v1h-1zM401 390h1v1h-1zM401 422h1v1h-1zM401 453h1v1h-1zM401 484h1v1h-1zM401 516h1v1h-1zM401 547h1v1h-1zM401 579h1v1h-1zM401 610h1v1h-1zM401 642h1v1h-1zM401 673h1v1h-1zM432 107h1v1h-1zM432 138h1v1h-1zM432 170h1v1h-1zM432 201h1v1h-1zM432 233h1v1h-1zM432 264h1v1h-1zM432 296h1v1h-1zM432 327h1v1h-1zM432 359h1v1h-1zM432 390h1v1h-1zM432 422h1v1h-1zM432 453h1v1h-1zM432 484h1v1h-1zM432 516h1v1h-1zM432 547h1v1h-1zM432 579h1v1h-1zM432 610h1v1h-1zM432 642h1v1h-1zM432 673h1v1h-1zM464 107h1v1h-1zM464 138h1v1h-1zM464 170h1v1h-1zM464 201h1v1h-1zM464 233h1v1h-1zM464 264h1v1h-1zM464 296h1v1h-1zM464 327h1v1h-1zM464 359h1v1h-1zM464 390h1v1h-1zM464 422h1v1h-1zM464 453h1v1h-1zM464 484h1v1h-1zM464 516h1v1h-1zM464 547h1v1h-1zM464 579h1v1h-1zM464 610h1v1h-1zM464 642h1v1h-1zM464 673h1v1h-1zM495 107h1v1h-1zM495 138h1v1h-1zM495 170h1v1h-1zM495 201h1v1h-1zM495 233h1v1h-1zM495 264h1v1h-1zM495 296h1v1h-1zM495 327h1v1h-1zM495 359h1v1h-1zM495 390h1v1h-1zM495 422h1v1h-1zM495 453h1v1h-1zM495 484h1v1h-1zM495 516h1v1h-1zM495 547h1v1h-1zM495 579h1v1h-1zM495 610h1v1h-1zM495 642h1v1h-1zM495 673h1v1h-1zM527 107h1v1h-1zM527 138h1v1h-1zM527 170h1v1h-1zM527 201h1v1h-1zM527 233h1v1h-1zM527 264h1v1h-1zM527 296h1v1h-1zM527 327h1v1h-1zM527 359h1v1h-1zM527 390h1v1h-1zM527 422h1v1h-1zM527 453h1v1h-1zM527 484h1v1h-1zM527 516h1v1h-1zM527 547h1v1h-1zM527 579h1v1h-1zM527 610h1v1h-1zM527 642h1v1h-1zM527 673h1v1h-1zM558 107h1v1h-1zM558 138h1v1h-1zM558 170h1v1h-1zM558 201h1v1h-1zM558 233h1v1h-1zM558 264h1v1h-1zM558 296h1v1h-1zM558 327h1v1h-1zM558 359h1v1h-1zM558 390h1v1h-1zM558 422h1v1h-1zM558 453h1v1h-1zM558 484h1v1h-1zM558 516h1v1h-1zM558 547h1v1h-1zM558 579h1v1h-1zM558 610h1v1h-1zM558 642h1v1h-1zM558 673h1v1h-1zM590 107h1v1h-1zM590 138h1v1h-1zM590 170h1v1h-1zM590 201h1v1h-1zM590 233h1v1h-1zM590 264h1v1h-1zM590 296h1v1h-1zM590 327h1v1h-1zM590 359h1v1h-1zM590 390h1v1h-1zM590 422h1v1h-1zM590 453h1v1h-1zM590 484h1v1h-1zM590 516h1v1h-1zM590 547h1v1h-1zM590 579h1v1h-1zM590 610h1v1h-1zM590 642h1v1h-1zM590 673h1v1h-1zM621 107h1v1h-1zM621 138h1v1h-1zM621 170h1v1h-1zM621 201h1v1h-1zM621 233h1v1h-1zM621 264h1v1h-1zM621 296h1v1h-1zM621 327h1v1h-1zM621 359h1v1h-1zM621 390h1v1h-1zM621 422h1v1h-1zM621 453h1v1h-1zM621 484h1v1h-1zM621 516h1v1h-1zM621 547h1v1h-1zM621 579h1v1h-1zM621 610h1v1h-1zM621 642h1v1h-1zM621 673h1v1h-1zM653 107h1v1h-1zM653 138h1v1h-1zM653 170h1v1h-1zM653 201h1v1h-1zM653 233h1v1h-1zM653 264h1v1h-1zM653 296h1v1h-1zM653 327h1v1h-1zM653 359h1v1h-1zM653 390h1v1h-1zM653 422h1v1h-1zM653 453h1v1h-1zM653 484h1v1h-1zM653 516h1v1h-1zM653 547h1v1h-1zM653 579h1v1h-1zM653 610h1v1h-1zM653 642h1v1h-1zM653 673h1v1h-1zM684 107h1v1h-1zM684 138h1v1h-1zM684 170h1v1h-1zM684 201h1v1h-1zM684 233h1v1h-1zM684 264h1v1h-1zM684 296h1v1h-1zM684 327h1v1h-1zM684 359h1v1h-1zM684 390h1v1h-1zM684 422h1v1h-1zM684 453h1v1h-1zM684 484h1v1h-1zM684 516h1v1h-1zM684 547h1v1h-1zM684 579h1v1h-1zM684 610h1v1h-1zM684 642h1v1h-1zM684 673h1v1h-1zM716 107h1v1h-1zM716 138h1v1h-1zM716 170h1v1h-1zM716 201h1v1h-1zM716 233h1v1h-1zM716 264h1v1h-1zM716 296h1v1h-1zM716 327h1v1h-1zM716 359h1v1h-1zM716 390h1v1h-1zM716 422h1v1h-1zM716 453h1v1h-1zM716 484h1v1h-1zM716 516h1v1h-1zM716 547h1v1h-1zM716 579h1v1h-1zM716 610h1v1h-1zM716 642h1v1h-1zM716 673h1v1h-1zM747 107h1v1h-1zM747 138h1v1h-1zM747 170h1v1h-1zM747 201h1v1h-1zM747 233h1v1h-1zM747 264h1v1h-1zM747 296h1v1h-1zM747 327h1v1h-1zM747 359h1v1h-1zM747 390h1v1h-1zM747 422h1v1h-1zM747 453h1v1h-1zM747 484h1v1h-1zM747 516h1v1h-1zM747 547h1v1h-1zM747 579h1v1h-1zM747 610h1v1h-1zM747 642h1v1h-1zM747 673h1v1h-1zM779 107h1v1h-1zM779 138h1v1h-1zM779 170h1v1h-1zM779 201h1v1h-1zM779 233h1v1h-1zM779 264h1v1h-1zM779 296h1v1h-1zM779 327h1v1h-1zM779 359h1v1h-1zM779 390h1v1h-1zM779 422h1v1h-1zM779 453h1v1h-1zM779 484h1v1h-1zM779 516h1v1h-1zM779 547h1v1h-1zM779 579h1v1h-1zM779 610h1v1h-1zM779 642h1v1h-1zM779 673h1v1h-1zM810 107h1v1h-1zM810 138h1v1h-1zM810 170h1v1h-1zM810 201h1v1h-1zM810 233h1v1h-1zM810 264h1v1h-1zM810 296h1v1h-1zM810 327h1v1h-1zM810 359h1v1h-1zM810 390h1v1h-1zM810 422h1v1h-1zM810 453h1v1h-1zM810 484h1v1h-1zM810 516h1v1h-1zM810 547h1v1h-1zM810 579h1v1h-1zM810 610h1v1h-1zM810 642h1v1h-1zM810 673h1v1h-1zM842 107h1v1h-1zM842 138h1v1h-1zM842 170h1v1h-1zM842 201h1v1h-1zM842 233h1v1h-1zM842 264h1v1h-1zM842 296h1v1h-1zM842 327h1v1h-1zM842 359h1v1h-1zM842 390h1v1h-1zM842 422h1v1h-1zM842 453h1v1h-1zM842 484h1v1h-1zM842 516h1v1h-1zM842 547h1v1h-1zM842 579h1v1h-1zM842 610h1v1h-1zM842 642h1v1h-1zM842 673h1v1h-1zM873 107h1v1h-1zM873 138h1v1h-1zM873 170h1v1h-1zM873 201h1v1h-1zM873 233h1v1h-1zM873 264h1v1h-1zM873 296h1v1h-1zM873 327h1v1h-1zM873 359h1v1h-1zM873 390h1v1h-1zM873 422h1v1h-1zM873 453h1v1h-1zM873 484h1v1h-1zM873 516h1v1h-1zM873 547h1v1h-1zM873 579h1v1h-1zM873 610h1v1h-1zM873 642h1v1h-1zM873 673h1v1h-1zM905 107h1v1h-1zM905 138h1v1h-1zM905 170h1v1h-1zM905 201h1v1h-1zM905 233h1v1h-1zM905 264h1v1h-1zM905 296h1v1h-1zM905 327h1v1h-1zM905 359h1v1h-1zM905 390h1v1h-1zM905 422h1v1h-1zM905 453h1v1h-1zM905 484h1v1h-1zM905 516h1v1h-1zM905 547h1v1h-1zM905 579h1v1h-1zM905 610h1v1h-1zM905 642h1v1h-1zM905 673h1v1h-1zM936 107h1v1h-1zM936 138h1v1h-1zM936 170h1v1h-1zM936 201h1v1h-1zM936 233h1v1h-1zM936 264h1v1h-1zM936 296h1v1h-1zM936 327h1v1h-1zM936 359h1v1h-1zM936 390h1v1h-1zM936 422h1v1h-1zM936 453h1v1h-1zM936 484h1v1h-1zM936 516h1v1h-1zM936 547h1v1h-1zM936 579h1v1h-1zM936 610h1v1h-1zM936 642h1v1h-1zM936 673h1v1h-1z" fill="#00FFFF"/><path d="M462 138h2v1h-2z M465 138h2v1h-2z M464 136h1v2h-1z M464 139h1v2h-1z" fill="#00FFFF"/><path d="M777 138h2v1h-2z M780 138h2v1h-2z M779 136h1v2h-1z M779 139h1v2h-1z" fill="#00FFFF"/><path d="M462 453h2v1h-2z M465 453h2v1h-2z M464 451h1v2h-1z M464 454h1v2h-1z" fill="#00FFFF"/><path d="M777 453h2v1h-2z M780 453h2v1h-2z M779 451h1v2h-1z M779 454h1v2h-1z" fill="#00FFFF"/><ellipse cx="567" cy="378.5" rx="69.5" ry="70" fill="url(#hatch)" stroke="#5000FF" stroke-width="1"/><path d="M405.5 514.3 L405.5 663.5 L726.5 663.5 L726.5 516.6 A211 211 0 0 1 405.5 514.3 Z" fill="url(#hatch)" stroke="#5000FF" stroke-width="1"/><path d="M749 338h4v1h-4z M754 338h4v1h-4z M753 334h1v4h-1z M753 339h1v4h-1z" fill="#000"/></g></svg><div class="a" style="left:946px;top:102px;width:17px;height:590px;background-color:#fff;background-image:linear-gradient(45deg,#ECE9D8 25%,transparent 25%,transparent 75%,#ECE9D8 75%),linear-gradient(45deg,#ECE9D8 25%,transparent 25%,transparent 75%,#ECE9D8 75%);background-size:2px 2px;background-position:0 0,1px 1px;"></div><div class="a" style="left:946px;top:102px;width:17px;height:17px;background:#716F64"></div><div class="a" style="left:946px;top:102px;width:16px;height:16px;background:#FFFFFF"></div><div class="a" style="left:947px;top:103px;width:15px;height:15px;background:#ACA899"></div><div class="a" style="left:947px;top:103px;width:14px;height:14px;background:#F1EFE2"></div><div class="a" style="left:948px;top:104px;width:13px;height:13px;background:#ECE9D8"></div><svg class="a" style="left:946px;top:102px" width="17" height="17" shape-rendering="crispEdges"><path d="M7 6h1v1h1v1h1v1h1v1h-7v-1h1v-1h1v-1h1z" fill="#000"/></svg><div class="a" style="left:946px;top:675px;width:17px;height:17px;background:#716F64"></div><div class="a" style="left:946px;top:675px;width:16px;height:16px;background:#FFFFFF"></div><div class="a" style="left:947px;top:676px;width:15px;height:15px;background:#ACA899"></div><div class="a" style="left:947px;top:676px;width:14px;height:14px;background:#F1EFE2"></div><div class="a" style="left:948px;top:677px;width:13px;height:13px;background:#ECE9D8"></div><svg class="a" style="left:946px;top:675px" width="17" height="17" shape-rendering="crispEdges"><path d="M4 6h7v1h-1v1h-1v1h-1v1h-1v-1h-1v-1h-1v-1h-1z" fill="#000"/></svg><div class="a" style="left:946px;top:392px;width:17px;height:10px;background:#716F64"></div><div class="a" style="left:946px;top:392px;width:16px;height:9px;background:#FFFFFF"></div><div class="a" style="left:947px;top:393px;width:15px;height:8px;background:#ACA899"></div><div class="a" style="left:947px;top:393px;width:14px;height:7px;background:#F1EFE2"></div><div class="a" style="left:948px;top:394px;width:13px;height:6px;background:#ECE9D8"></div><div class="a" style="left:186px;top:692px;width:760px;height:17px;background-color:#fff;background-image:linear-gradient(45deg,#ECE9D8 25%,transparent 25%,transparent 75%,#ECE9D8 75%),linear-gradient(45deg,#ECE9D8 25%,transparent 25%,transparent 75%,#ECE9D8 75%);background-size:2px 2px;background-position:0 0,1px 1px;"></div><div class="a" style="left:186px;top:692px;width:17px;height:17px;background:#716F64"></div><div class="a" style="left:186px;top:692px;width:16px;height:16px;background:#FFFFFF"></div><div class="a" style="left:187px;top:693px;width:15px;height:15px;background:#ACA899"></div><div class="a" style="left:187px;top:693px;width:14px;height:14px;background:#F1EFE2"></div><div class="a" style="left:188px;top:694px;width:13px;height:13px;background:#ECE9D8"></div><svg class="a" style="left:186px;top:692px" width="17" height="17" shape-rendering="crispEdges"><path d="M8 5h1v7h-1v-1h-1v-1h-1v-1h-1v-1h1v-1h1v-1h1z" fill="#000"/></svg><div class="a" style="left:929px;top:692px;width:17px;height:17px;background:#716F64"></div><div class="a" style="left:929px;top:692px;width:16px;height:16px;background:#FFFFFF"></div><div class="a" style="left:930px;top:693px;width:15px;height:15px;background:#ACA899"></div><div class="a" style="left:930px;top:693px;width:14px;height:14px;background:#F1EFE2"></div><div class="a" style="left:931px;top:694px;width:13px;height:13px;background:#ECE9D8"></div><svg class="a" style="left:929px;top:692px" width="17" height="17" shape-rendering="crispEdges"><path d="M6 5h1v1h1v1h1v1h1v1h-1v1h-1v1h-1v1h-1z" fill="#000"/></svg><div class="a" style="left:557px;top:692px;width:18px;height:17px;background:#716F64"></div><div class="a" style="left:557px;top:692px;width:17px;height:16px;background:#FFFFFF"></div><div class="a" style="left:558px;top:693px;width:16px;height:15px;background:#ACA899"></div><div class="a" style="left:558px;top:693px;width:15px;height:14px;background:#F1EFE2"></div><div class="a" style="left:559px;top:694px;width:14px;height:13px;background:#ECE9D8"></div><div class="a" style="left:946px;top:692px;width:17px;height:17px;background:#ECE9D8"></div><div class="a" style="left:967px;top:99px;width:1px;height:608px;background:#ACA899"></div><div class="a" style="left:968px;top:99px;width:1px;height:608px;background:#716F64"></div><div class="a" style="left:969px;top:100px;width:112px;height:607px;background:#ACA899"></div><div class="a" style="left:969px;top:100px;width:111px;height:606px;background:#FFFFFF"></div><div class="a" style="left:970px;top:101px;width:110px;height:605px;background:#ECE9D8"></div><div class="a" style="left:969px;top:101px;width:1px;height:605px;background:#F1EFE2"></div><div class="a" style="left:971px;top:103px;width:107px;height:3px;background:#ACA899"></div><div class="a" style="left:971px;top:103px;width:106px;height:2px;background:#FFFFFF"></div><div class="a" style="left:971px;top:106px;width:107px;height:3px;background:#ACA899"></div><div class="a" style="left:971px;top:106px;width:106px;height:2px;background:#FFFFFF"></div><div class="t" style="left:977.00px;top:112px;font-size:13px;line-height:13px;font-weight:normal;color:#000;transform:scaleX(0.7647);transform-origin:0 0;">AS</div><div class="t" style="left:1004.24px;top:112px;font-size:13px;line-height:13px;font-weight:normal;color:#000;transform:scaleX(0.7647);transform-origin:0 0;">NS</div><div class="t" style="left:1032.00px;top:112px;font-size:13px;line-height:13px;font-weight:normal;color:#000;transform:scaleX(0.8750);transform-origin:0 0;">AV</div><div class="t" style="left:1059.18px;top:112px;font-size:13px;line-height:13px;font-weight:normal;color:#000;transform:scaleX(0.8235);transform-origin:0 0;">NV</div><div class="t" style="left:1006.16px;top:131px;font-size:13px;line-height:13px;font-weight:normal;color:#000;transform:scaleX(0.8387);transform-origin:0 0;">Plans</div><svg class="a" style="left:1070px;top:136px" width="8" height="5" shape-rendering="crispEdges"><path d="M0 0h7v1h-1v1h-1v1h-1v1h-1v-1h-1v-1h-1v-1h-1z" fill="#000"/></svg><div class="a" style="left:970px;top:148px;width:1px;height:6px;background:#ACA899"></div><div class="a" style="left:971px;top:148px;width:1px;height:6px;background:#FFFFFF"></div><div class="a" style="left:1078px;top:148px;width:1px;height:6px;background:#ACA899"></div><div class="a" style="left:1079px;top:148px;width:1px;height:6px;background:#FFFFFF"></div><div class="a" style="left:970px;top:154px;width:110px;height:552px;background:#FFFFFF"></div><div class="a" style="left:970px;top:154px;width:109px;height:551px;background:#ACA899"></div><div class="a" style="left:971px;top:155px;width:108px;height:550px;background:#F1EFE2"></div><div class="a" style="left:971px;top:155px;width:107px;height:549px;background:#716F64"></div><div class="a" style="left:972px;top:156px;width:106px;height:548px;background:#FFFFFF"></div><div class="a" style="left:973px;top:157px;width:75px;height:15px;background:#9D9A8E"></div><div class="t" style="left:975.10px;top:157px;font-size:13px;line-height:13px;font-weight:bold;color:#fff;transform:scaleX(0.9016);transform-origin:0 0;">DRC_BLK</div><svg class="a" style="left:1049px;top:157px" width="28" height="14" shape-rendering="crispEdges"><rect x="0" y="0" width="28" height="14" fill="#FF0000"/><rect x="3" y="3" width="22" height="8" fill="#fff"/></svg><div class="a" style="left:973px;top:173px;width:75px;height:15px;background:#9D9A8E"></div><div class="t" style="left:975.08px;top:173px;font-size:13px;line-height:13px;font-weight:bold;color:#fff;transform:scaleX(0.9200);transform-origin:0 0;">METAL1</div><svg class="a" style="left:1049px;top:173px" width="28" height="14" shape-rendering="crispEdges"><rect x="0" y="0" width="28" height="14" fill="#00A8FF"/><rect x="1" y="1" width="26" height="12" fill="#fff"/><rect x="1" y="1" width="1" height="1" fill="#00A8FF"/><rect x="5" y="1" width="1" height="1" fill="#00A8FF"/><rect x="9" y="1" width="1" height="1" fill="#00A8FF"/><rect x="13" y="1" width="1" height="1" fill="#00A8FF"/><rect x="17" y="1" width="1" height="1" fill="#00A8FF"/><rect x="21" y="1" width="1" height="1" fill="#00A8FF"/><rect x="25" y="1" width="1" height="1" fill="#00A8FF"/><rect x="3" y="3" width="1" height="1" fill="#00A8FF"/><rect x="7" y="3" width="1" height="1" fill="#00A8FF"/><rect x="11" y="3" width="1" height="1" fill="#00A8FF"/><rect x="15" y="3" width="1" height="1" fill="#00A8FF"/><rect x="19" y="3" width="1" height="1" fill="#00A8FF"/><rect x="23" y="3" width="1" height="1" fill="#00A8FF"/><rect x="1" y="5" width="1" height="1" fill="#00A8FF"/><rect x="5" y="5" width="1" height="1" fill="#00A8FF"/><rect x="9" y="5" width="1" height="1" fill="#00A8FF"/><rect x="13" y="5" width="1" height="1" fill="#00A8FF"/><rect x="17" y="5" width="1" height="1" fill="#00A8FF"/><rect x="21" y="5" width="1" height="1" fill="#00A8FF"/><rect x="25" y="5" width="1" height="1" fill="#00A8FF"/><rect x="3" y="7" width="1" height="1" fill="#00A8FF"/><rect x="7" y="7" width="1" height="1" fill="#00A8FF"/><rect x="11" y="7" width="1" height="1" fill="#00A8FF"/><rect x="15" y="7" width="1" height="1" fill="#00A8FF"/><rect x="19" y="7" width="1" height="1" fill="#00A8FF"/><rect x="23" y="7" width="1" height="1" fill="#00A8FF"/><rect x="1" y="9" width="1" height="1" fill="#00A8FF"/><rect x="5" y="9" width="1" height="1" fill="#00A8FF"/><rect x="9" y="9" width="1" height="1" fill="#00A8FF"/><rect x="13" y="9" width="1" height="1" fill="#00A8FF"/><rect x="17" y="9" width="1" height="1" fill="#00A8FF"/><rect x="21" y="9" width="1" height="1" fill="#00A8FF"/><rect x="25" y="9" width="1" height="1" fill="#00A8FF"/><rect x="3" y="11" width="1" height="1" fill="#00A8FF"/><rect x="7" y="11" width="1" height="1" fill="#00A8FF"/><rect x="11" y="11" width="1" height="1" fill="#00A8FF"/><rect x="15" y="11" width="1" height="1" fill="#00A8FF"/><rect x="19" y="11" width="1" height="1" fill="#00A8FF"/><rect x="23" y="11" width="1" height="1" fill="#00A8FF"/></svg><div class="a" style="left:973px;top:189px;width:75px;height:15px;background:#9D9A8E"></div><div class="t" style="left:975.06px;top:189px;font-size:13px;line-height:13px;font-weight:bold;color:#fff;transform:scaleX(0.9400);transform-origin:0 0;">METAL2</div><svg class="a" style="left:1049px;top:189px" width="28" height="14" shape-rendering="crispEdges"><rect x="0" y="0" width="28" height="14" fill="#58A800"/><rect x="1" y="1" width="26" height="12" fill="#fff"/><rect x="1" y="1" width="1" height="1" fill="#58A800"/><rect x="5" y="1" width="1" height="1" fill="#58A800"/><rect x="9" y="1" width="1" height="1" fill="#58A800"/><rect x="13" y="1" width="1" height="1" fill="#58A800"/><rect x="17" y="1" width="1" height="1" fill="#58A800"/><rect x="21" y="1" width="1" height="1" fill="#58A800"/><rect x="25" y="1" width="1" height="1" fill="#58A800"/><rect x="3" y="3" width="1" height="1" fill="#58A800"/><rect x="7" y="3" width="1" height="1" fill="#58A800"/><rect x="11" y="3" width="1" height="1" fill="#58A800"/><rect x="15" y="3" width="1" height="1" fill="#58A800"/><rect x="19" y="3" width="1" height="1" fill="#58A800"/><rect x="23" y="3" width="1" height="1" fill="#58A800"/><rect x="1" y="5" width="1" height="1" fill="#58A800"/><rect x="5" y="5" width="1" height="1" fill="#58A800"/><rect x="9" y="5" width="1" height="1" fill="#58A800"/><rect x="13" y="5" width="1" height="1" fill="#58A800"/><rect x="17" y="5" width="1" height="1" fill="#58A800"/><rect x="21" y="5" width="1" height="1" fill="#58A800"/><rect x="25" y="5" width="1" height="1" fill="#58A800"/><rect x="3" y="7" width="1" height="1" fill="#58A800"/><rect x="7" y="7" width="1" height="1" fill="#58A800"/><rect x="11" y="7" width="1" height="1" fill="#58A800"/><rect x="15" y="7" width="1" height="1" fill="#58A800"/><rect x="19" y="7" width="1" height="1" fill="#58A800"/><rect x="23" y="7" width="1" height="1" fill="#58A800"/><rect x="1" y="9" width="1" height="1" fill="#58A800"/><rect x="5" y="9" width="1" height="1" fill="#58A800"/><rect x="9" y="9" width="1" height="1" fill="#58A800"/><rect x="13" y="9" width="1" height="1" fill="#58A800"/><rect x="17" y="9" width="1" height="1" fill="#58A800"/><rect x="21" y="9" width="1" height="1" fill="#58A800"/><rect x="25" y="9" width="1" height="1" fill="#58A800"/><rect x="3" y="11" width="1" height="1" fill="#58A800"/><rect x="7" y="11" width="1" height="1" fill="#58A800"/><rect x="11" y="11" width="1" height="1" fill="#58A800"/><rect x="15" y="11" width="1" height="1" fill="#58A800"/><rect x="19" y="11" width="1" height="1" fill="#58A800"/><rect x="23" y="11" width="1" height="1" fill="#58A800"/></svg><div class="a" style="left:973px;top:205px;width:75px;height:15px;background:#9D9A8E"></div><div class="t" style="left:975.21px;top:205px;font-size:13px;line-height:13px;font-weight:normal;color:#fff;transform:scaleX(0.7869);transform-origin:0 0;">Comments</div><svg class="a" style="left:1049px;top:205px" width="28" height="14" shape-rendering="crispEdges"><rect x="0" y="0" width="28" height="14" fill="#000"/><rect x="1" y="1" width="26" height="12" fill="#fff"/></svg><div class="a" style="left:973px;top:221px;width:75px;height:15px;background:#9D9A8E"></div><div class="t" style="left:975.19px;top:221px;font-size:13px;line-height:13px;font-weight:normal;color:#fff;transform:scaleX(0.8113);transform-origin:0 0;">met1not2</div><svg class="a" style="left:1049px;top:221px" width="28" height="14" shape-rendering="crispEdges"><rect x="0" y="0" width="28" height="14" fill="#fff"/><rect x="0" y="0" width="1" height="1" fill="#FF0000"/><rect x="9" y="0" width="1" height="1" fill="#FF0000"/><rect x="18" y="0" width="1" height="1" fill="#FF0000"/><rect x="27" y="0" width="1" height="1" fill="#FF0000"/><rect x="8" y="1" width="1" height="1" fill="#FF0000"/><rect x="17" y="1" width="1" height="1" fill="#FF0000"/><rect x="26" y="1" width="1" height="1" fill="#FF0000"/><rect x="7" y="2" width="1" height="1" fill="#FF0000"/><rect x="16" y="2" width="1" height="1" fill="#FF0000"/><rect x="25" y="2" width="1" height="1" fill="#FF0000"/><rect x="6" y="3" width="1" height="1" fill="#FF0000"/><rect x="15" y="3" width="1" height="1" fill="#FF0000"/><rect x="24" y="3" width="1" height="1" fill="#FF0000"/><rect x="5" y="4" width="1" height="1" fill="#FF0000"/><rect x="14" y="4" width="1" height="1" fill="#FF0000"/><rect x="23" y="4" width="1" height="1" fill="#FF0000"/><rect x="4" y="5" width="1" height="1" fill="#FF0000"/><rect x="13" y="5" width="1" height="1" fill="#FF0000"/><rect x="22" y="5" width="1" height="1" fill="#FF0000"/><rect x="3" y="6" width="1" height="1" fill="#FF0000"/><rect x="12" y="6" width="1" height="1" fill="#FF0000"/><rect x="21" y="6" width="1" height="1" fill="#FF0000"/><rect x="2" y="7" width="1" height="1" fill="#FF0000"/><rect x="11" y="7" width="1" height="1" fill="#FF0000"/><rect x="20" y="7" width="1" height="1" fill="#FF0000"/><rect x="1" y="8" width="1" height="1" fill="#FF0000"/><rect x="10" y="8" width="1" height="1" fill="#FF0000"/><rect x="19" y="8" width="1" height="1" fill="#FF0000"/><rect x="0" y="9" width="1" height="1" fill="#FF0000"/><rect x="9" y="9" width="1" height="1" fill="#FF0000"/><rect x="18" y="9" width="1" height="1" fill="#FF0000"/><rect x="27" y="9" width="1" height="1" fill="#FF0000"/><rect x="8" y="10" width="1" height="1" fill="#FF0000"/><rect x="17" y="10" width="1" height="1" fill="#FF0000"/><rect x="26" y="10" width="1" height="1" fill="#FF0000"/><rect x="7" y="11" width="1" height="1" fill="#FF0000"/><rect x="16" y="11" width="1" height="1" fill="#FF0000"/><rect x="25" y="11" width="1" height="1" fill="#FF0000"/><rect x="6" y="12" width="1" height="1" fill="#FF0000"/><rect x="15" y="12" width="1" height="1" fill="#FF0000"/><rect x="24" y="12" width="1" height="1" fill="#FF0000"/><rect x="5" y="13" width="1" height="1" fill="#FF0000"/><rect x="14" y="13" width="1" height="1" fill="#FF0000"/><rect x="23" y="13" width="1" height="1" fill="#FF0000"/><rect x="0.5" y="0.5" width="27" height="13" fill="none" stroke="#FF0000" stroke-width="1"/></svg><div class="a" style="left:973px;top:237px;width:75px;height:15px;background:#9D9A8E"></div><div class="t" style="left:975.11px;top:237px;font-size:13px;line-height:13px;font-weight:bold;color:#fff;transform:scaleX(0.8861);transform-origin:0 0;">met1LessBlk</div><svg class="a" style="left:1049px;top:237px" width="28" height="14" shape-rendering="crispEdges"><rect x="0" y="0" width="28" height="14" fill="#fff"/><rect x="0" y="0" width="1" height="1" fill="#5500FF"/><rect x="9" y="0" width="1" height="1" fill="#5500FF"/><rect x="18" y="0" width="1" height="1" fill="#5500FF"/><rect x="27" y="0" width="1" height="1" fill="#5500FF"/><rect x="8" y="1" width="1" height="1" fill="#5500FF"/><rect x="17" y="1" width="1" height="1" fill="#5500FF"/><rect x="26" y="1" width="1" height="1" fill="#5500FF"/><rect x="7" y="2" width="1" height="1" fill="#5500FF"/><rect x="16" y="2" width="1" height="1" fill="#5500FF"/><rect x="25" y="2" width="1" height="1" fill="#5500FF"/><rect x="6" y="3" width="1" height="1" fill="#5500FF"/><rect x="15" y="3" width="1" height="1" fill="#5500FF"/><rect x="24" y="3" width="1" height="1" fill="#5500FF"/><rect x="5" y="4" width="1" height="1" fill="#5500FF"/><rect x="14" y="4" width="1" height="1" fill="#5500FF"/><rect x="23" y="4" width="1" height="1" fill="#5500FF"/><rect x="4" y="5" width="1" height="1" fill="#5500FF"/><rect x="13" y="5" width="1" height="1" fill="#5500FF"/><rect x="22" y="5" width="1" height="1" fill="#5500FF"/><rect x="3" y="6" width="1" height="1" fill="#5500FF"/><rect x="12" y="6" width="1" height="1" fill="#5500FF"/><rect x="21" y="6" width="1" height="1" fill="#5500FF"/><rect x="2" y="7" width="1" height="1" fill="#5500FF"/><rect x="11" y="7" width="1" height="1" fill="#5500FF"/><rect x="20" y="7" width="1" height="1" fill="#5500FF"/><rect x="1" y="8" width="1" height="1" fill="#5500FF"/><rect x="10" y="8" width="1" height="1" fill="#5500FF"/><rect x="19" y="8" width="1" height="1" fill="#5500FF"/><rect x="0" y="9" width="1" height="1" fill="#5500FF"/><rect x="9" y="9" width="1" height="1" fill="#5500FF"/><rect x="18" y="9" width="1" height="1" fill="#5500FF"/><rect x="27" y="9" width="1" height="1" fill="#5500FF"/><rect x="8" y="10" width="1" height="1" fill="#5500FF"/><rect x="17" y="10" width="1" height="1" fill="#5500FF"/><rect x="26" y="10" width="1" height="1" fill="#5500FF"/><rect x="7" y="11" width="1" height="1" fill="#5500FF"/><rect x="16" y="11" width="1" height="1" fill="#5500FF"/><rect x="25" y="11" width="1" height="1" fill="#5500FF"/><rect x="6" y="12" width="1" height="1" fill="#5500FF"/><rect x="15" y="12" width="1" height="1" fill="#5500FF"/><rect x="24" y="12" width="1" height="1" fill="#5500FF"/><rect x="5" y="13" width="1" height="1" fill="#5500FF"/><rect x="14" y="13" width="1" height="1" fill="#5500FF"/><rect x="23" y="13" width="1" height="1" fill="#5500FF"/><rect x="0.5" y="0.5" width="27" height="13" fill="none" stroke="#5500FF" stroke-width="1"/></svg><div class="a" style="left:973px;top:253px;width:75px;height:15px;background:#5500FF"></div><div class="t" style="left:975.11px;top:253px;font-size:13px;line-height:13px;font-weight:bold;color:#000;transform:scaleX(0.8861);transform-origin:0 0;">met2LessBlk</div><svg class="a" style="left:1049px;top:253px" width="28" height="14" shape-rendering="crispEdges"><rect x="0" y="0" width="28" height="14" fill="#fff"/><rect x="0" y="0" width="1" height="1" fill="#5500FF"/><rect x="9" y="0" width="1" height="1" fill="#5500FF"/><rect x="18" y="0" width="1" height="1" fill="#5500FF"/><rect x="27" y="0" width="1" height="1" fill="#5500FF"/><rect x="1" y="1" width="1" height="1" fill="#5500FF"/><rect x="10" y="1" width="1" height="1" fill="#5500FF"/><rect x="19" y="1" width="1" height="1" fill="#5500FF"/><rect x="2" y="2" width="1" height="1" fill="#5500FF"/><rect x="11" y="2" width="1" height="1" fill="#5500FF"/><rect x="20" y="2" width="1" height="1" fill="#5500FF"/><rect x="3" y="3" width="1" height="1" fill="#5500FF"/><rect x="12" y="3" width="1" height="1" fill="#5500FF"/><rect x="21" y="3" width="1" height="1" fill="#5500FF"/><rect x="4" y="4" width="1" height="1" fill="#5500FF"/><rect x="13" y="4" width="1" height="1" fill="#5500FF"/><rect x="22" y="4" width="1" height="1" fill="#5500FF"/><rect x="5" y="5" width="1" height="1" fill="#5500FF"/><rect x="14" y="5" width="1" height="1" fill="#5500FF"/><rect x="23" y="5" width="1" height="1" fill="#5500FF"/><rect x="6" y="6" width="1" height="1" fill="#5500FF"/><rect x="15" y="6" width="1" height="1" fill="#5500FF"/><rect x="24" y="6" width="1" height="1" fill="#5500FF"/><rect x="7" y="7" width="1" height="1" fill="#5500FF"/><rect x="16" y="7" width="1" height="1" fill="#5500FF"/><rect x="25" y="7" width="1" height="1" fill="#5500FF"/><rect x="8" y="8" width="1" height="1" fill="#5500FF"/><rect x="17" y="8" width="1" height="1" fill="#5500FF"/><rect x="26" y="8" width="1" height="1" fill="#5500FF"/><rect x="0" y="9" width="1" height="1" fill="#5500FF"/><rect x="9" y="9" width="1" height="1" fill="#5500FF"/><rect x="18" y="9" width="1" height="1" fill="#5500FF"/><rect x="27" y="9" width="1" height="1" fill="#5500FF"/><rect x="1" y="10" width="1" height="1" fill="#5500FF"/><rect x="10" y="10" width="1" height="1" fill="#5500FF"/><rect x="19" y="10" width="1" height="1" fill="#5500FF"/><rect x="2" y="11" width="1" height="1" fill="#5500FF"/><rect x="11" y="11" width="1" height="1" fill="#5500FF"/><rect x="20" y="11" width="1" height="1" fill="#5500FF"/><rect x="3" y="12" width="1" height="1" fill="#5500FF"/><rect x="12" y="12" width="1" height="1" fill="#5500FF"/><rect x="21" y="12" width="1" height="1" fill="#5500FF"/><rect x="4" y="13" width="1" height="1" fill="#5500FF"/><rect x="13" y="13" width="1" height="1" fill="#5500FF"/><rect x="22" y="13" width="1" height="1" fill="#5500FF"/><rect x="0.5" y="0.5" width="27" height="13" fill="none" stroke="#5500FF" stroke-width="1"/></svg><div class="a" style="left:972px;top:678px;width:107px;height:1px;background:#F1EFE2"></div><div class="a" style="left:971px;top:679px;width:108px;height:1px;background:#FFFFFF"></div><div class="a" style="left:971px;top:680px;width:108px;height:8px;background:#ECE9D8"></div><div class="a" style="left:1078px;top:680px;width:1px;height:7px;background:#ACA899"></div><div class="a" style="left:971px;top:686px;width:107px;height:1px;background:#ACA899"></div><div class="a" style="left:971px;top:687px;width:107px;height:1px;background:#716F64"></div><div class="a" style="left:971px;top:680px;width:1px;height:6px;background:#FFFFFF"></div><div class="a" style="left:4px;top:706px;width:179px;height:1px;background:#ACA899"></div><div class="a" style="left:4px;top:711px;width:1077px;height:1px;background:#FFFFFF"></div><div class="a" style="left:4px;top:732px;width:1077px;height:1px;background:#F1EFE2"></div><div class="a" style="left:4px;top:733px;width:1077px;height:1px;background:#ACA899"></div><div class="a" style="left:7px;top:714px;width:3px;height:17px;background:#ACA899"></div><div class="a" style="left:7px;top:714px;width:2px;height:16px;background:#FFFFFF"></div><div class="a" style="left:8px;top:715px;width:1px;height:15px;background:#ECE9D8"></div><div class="a" style="left:10px;top:714px;width:3px;height:17px;background:#ACA899"></div><div class="a" style="left:10px;top:714px;width:2px;height:16px;background:#FFFFFF"></div><div class="a" style="left:11px;top:715px;width:1px;height:15px;background:#ECE9D8"></div><div class="a" style="left:14px;top:712px;width:54px;height:20px;background:#FFFFFF"></div><div class="a" style="left:14px;top:712px;width:53px;height:19px;background:#ACA899"></div><div class="a" style="left:15px;top:713px;width:52px;height:18px;background:#F1EFE2"></div><div class="a" style="left:15px;top:713px;width:51px;height:17px;background:#716F64"></div><div class="a" style="left:16px;top:714px;width:50px;height:16px;background:#FFFFFF"></div><div class="t" style="left:20.19px;top:715px;font-size:13px;line-height:13px;font-weight:normal;color:#000;transform:scaleX(0.8148);transform-origin:0 0;">LISA</div><div class="a" style="left:51px;top:714px;width:15px;height:16px;background:#716F64"></div><div class="a" style="left:51px;top:714px;width:14px;height:15px;background:#FFFFFF"></div><div class="a" style="left:52px;top:715px;width:13px;height:14px;background:#ACA899"></div><div class="a" style="left:52px;top:715px;width:12px;height:13px;background:#F1EFE2"></div><div class="a" style="left:53px;top:716px;width:11px;height:12px;background:#ECE9D8"></div><svg class="a" style="left:51px;top:714px" width="15" height="16" shape-rendering="crispEdges"><path d="M3 6h7v1h-1v1h-1v1h-1v1h-1v-1h-1v-1h-1v-1h-1z" fill="#000"/></svg><div class="a" style="left:68px;top:712px;width:22px;height:20px;background:#EFECDD"></div><div class="t" style="left:71.00px;top:715px;font-size:13px;line-height:13px;font-weight:normal;color:#000;transform:scaleX(0.7895);transform-origin:0 0;">XI&gt;</div><div class="a" style="left:90px;top:712px;width:949px;height:20px;background:#FFFFFF"></div><div class="a" style="left:90px;top:712px;width:948px;height:19px;background:#ACA899"></div><div class="a" style="left:91px;top:713px;width:947px;height:18px;background:#F1EFE2"></div><div class="a" style="left:91px;top:713px;width:946px;height:17px;background:#716F64"></div><div class="a" style="left:92px;top:714px;width:945px;height:16px;background:#FFFFFF"></div><div class="a" style="left:1023px;top:714px;width:15px;height:16px;background:#716F64"></div><div class="a" style="left:1023px;top:714px;width:14px;height:15px;background:#FFFFFF"></div><div class="a" style="left:1024px;top:715px;width:13px;height:14px;background:#ACA899"></div><div class="a" style="left:1024px;top:715px;width:12px;height:13px;background:#F1EFE2"></div><div class="a" style="left:1025px;top:716px;width:11px;height:12px;background:#ECE9D8"></div><svg class="a" style="left:1023px;top:714px" width="15" height="16" shape-rendering="crispEdges"><path d="M3 6h7v1h-1v1h-1v1h-1v1h-1v-1h-1v-1h-1v-1h-1z" fill="#000"/></svg><div class="a" style="left:1040px;top:711px;width:40px;height:22px;background:#716F64"></div><div class="a" style="left:1040px;top:711px;width:39px;height:21px;background:#FFFFFF"></div><div class="a" style="left:1041px;top:712px;width:38px;height:20px;background:#ACA899"></div><div class="a" style="left:1041px;top:712px;width:37px;height:19px;background:#F1EFE2"></div><div class="a" style="left:1042px;top:713px;width:36px;height:18px;background:#ECE9D8"></div><div class="t" style="left:1050.14px;top:715px;font-size:13px;line-height:13px;font-weight:normal;color:#000;transform:scaleX(0.8636);transform-origin:0 0;">Run</div><div class="a" style="left:495px;top:736px;width:1px;height:21px;background:#ACA899"></div><div class="a" style="left:496px;top:736px;width:1px;height:21px;background:#FFFFFF"></div><div class="a" style="left:500px;top:736px;width:52px;height:21px;background:#FFFFFF"></div><div class="a" style="left:500px;top:736px;width:51px;height:20px;background:#ACA899"></div><div class="a" style="left:501px;top:737px;width:50px;height:19px;background:#ECE9D8"></div><div class="t" style="left:500px;top:739px;font-size:15px;line-height:15px;font-weight:normal;color:#000;letter-spacing:0.0px;">Sel: 0/0</div><div class="a" style="left:554px;top:736px;width:59px;height:21px;background:#FFFFFF"></div><div class="a" style="left:554px;top:736px;width:58px;height:20px;background:#ACA899"></div><div class="a" style="left:555px;top:737px;width:57px;height:19px;background:#ECE9D8"></div><div class="t" style="left:554px;top:739px;font-size:15px;line-height:15px;font-weight:normal;color:#000;letter-spacing:0.125px;">Hier: 0/0</div><div class="a" style="left:615px;top:736px;width:31px;height:21px;background:#FFFFFF"></div><div class="a" style="left:615px;top:736px;width:30px;height:20px;background:#ACA899"></div><div class="a" style="left:616px;top:737px;width:29px;height:19px;background:#ECE9D8"></div><div class="t" style="left:615px;top:739px;font-size:15px;line-height:15px;font-weight:normal;color:#000;letter-spacing:0.0px;">R/W</div><div class="a" style="left:647px;top:736px;width:37px;height:21px;background:#FFFFFF"></div><div class="a" style="left:647px;top:736px;width:36px;height:20px;background:#ACA899"></div><div class="a" style="left:648px;top:737px;width:35px;height:19px;background:#ECE9D8"></div><div class="t" style="left:648px;top:739px;font-size:15px;line-height:15px;font-weight:normal;color:#000;letter-spacing:-0.333px;">0 MB</div><div class="a" style="left:686px;top:736px;width:378px;height:21px;background:#FFFFFF"></div><div class="a" style="left:686px;top:736px;width:377px;height:20px;background:#ACA899"></div><div class="a" style="left:687px;top:737px;width:376px;height:19px;background:#ECE9D8"></div><div class="t" style="left:686px;top:739px;font-size:15px;line-height:15px;font-weight:normal;color:#000;letter-spacing:0.091px;">Expert 4.8.8</div><div class="t" style="left:773px;top:739px;font-size:15px;line-height:15px;font-weight:normal;color:#000;letter-spacing:-0.273px;">(build 1634)</div><div class="t" style="left:855px;top:739px;font-size:15px;line-height:15px;font-weight:normal;color:#000;letter-spacing:0.083px;">(aka 4.8.8.R)</div><div class="t" style="left:948px;top:739px;font-size:15px;line-height:15px;font-weight:normal;color:#000;letter-spacing:8.0px;">©</div><div class="t" style="left:966px;top:739px;font-size:15px;line-height:15px;font-weight:normal;color:#000;letter-spacing:-0.364px;">SILVACO 2010</div><svg class="a" style="left:1068px;top:746px" width="12" height="12" shape-rendering="crispEdges"><rect x="0" y="11" width="1" height="1" fill="#fff"/><rect x="1" y="11" width="1" height="1" fill="#ACA899"/><rect x="2" y="11" width="1" height="1" fill="#ACA899"/><rect x="1" y="10" width="1" height="1" fill="#fff"/><rect x="2" y="10" width="1" height="1" fill="#ACA899"/><rect x="3" y="10" width="1" height="1" fill="#ACA899"/><rect x="2" y="9" width="1" height="1" fill="#fff"/><rect x="3" y="9" width="1" height="1" fill="#ACA899"/><rect x="4" y="9" width="1" height="1" fill="#ACA899"/><rect x="3" y="8" width="1" height="1" fill="#fff"/><rect x="4" y="8" width="1" height="1" fill="#ACA899"/><rect x="5" y="8" width="1" height="1" fill="#ACA899"/><rect x="4" y="7" width="1" height="1" fill="#fff"/><rect x="5" y="7" width="1" height="1" fill="#ACA899"/><rect x="6" y="7" width="1" height="1" fill="#ACA899"/><rect x="5" y="6" width="1" height="1" fill="#fff"/><rect x="6" y="6" width="1" height="1" fill="#ACA899"/><rect x="7" y="6" width="1" height="1" fill="#ACA899"/><rect x="6" y="5" width="1" height="1" fill="#fff"/><rect x="7" y="5" width="1" height="1" fill="#ACA899"/><rect x="8" y="5" width="1" height="1" fill="#ACA899"/><rect x="7" y="4" width="1" height="1" fill="#fff"/><rect x="8" y="4" width="1" height="1" fill="#ACA899"/><rect x="9" y="4" width="1" height="1" fill="#ACA899"/><rect x="8" y="3" width="1" height="1" fill="#fff"/><rect x="9" y="3" width="1" height="1" fill="#ACA899"/><rect x="10" y="3" width="1" height="1" fill="#ACA899"/><rect x="9" y="2" width="1" height="1" fill="#fff"/><rect x="10" y="2" width="1" height="1" fill="#ACA899"/><rect x="11" y="2" width="1" height="1" fill="#ACA899"/><rect x="10" y="1" width="1" height="1" fill="#fff"/><rect x="11" y="1" width="1" height="1" fill="#ACA899"/><rect x="11" y="0" width="1" height="1" fill="#fff"/><rect x="4" y="11" width="1" height="1" fill="#fff"/><rect x="5" y="11" width="1" height="1" fill="#ACA899"/><rect x="6" y="11" width="1" height="1" fill="#ACA899"/><rect x="5" y="10" width="1" height="1" fill="#fff"/><rect x="6" y="10" width="1" height="1" fill="#ACA899"/><rect x="7" y="10" width="1" height="1" fill="#ACA899"/><rect x="6" y="9" width="1" height="1" fill="#fff"/><rect x="7" y="9" width="1" height="1" fill="#ACA899"/><rect x="8" y="9" width="1" height="1" fill="#ACA899"/><rect x="7" y="8" width="1" height="1" fill="#fff"/><rect x="8" y="8" width="1" height="1" fill="#ACA899"/><rect x="9" y="8" width="1" height="1" fill="#ACA899"/><rect x="8" y="7" width="1" height="1" fill="#fff"/><rect x="9" y="7" width="1" height="1" fill="#ACA899"/><rect x="10" y="7" width="1" height="1" fill="#ACA899"/><rect x="9" y="6" width="1" height="1" fill="#fff"/><rect x="10" y="6" width="1" height="1" fill="#ACA899"/><rect x="11" y="6" width="1" height="1" fill="#ACA899"/><rect x="10" y="5" width="1" height="1" fill="#fff"/><rect x="11" y="5" width="1" height="1" fill="#ACA899"/><rect x="11" y="4" width="1" height="1" fill="#fff"/><rect x="8" y="11" width="1" height="1" fill="#fff"/><rect x="9" y="11" width="1" height="1" fill="#ACA899"/><rect x="10" y="11" width="1" height="1" fill="#ACA899"/><rect x="9" y="10" width="1" height="1" fill="#fff"/><rect x="10" y="10" width="1" height="1" fill="#ACA899"/><rect x="11" y="10" width="1" height="1" fill="#ACA899"/><rect x="10" y="9" width="1" height="1" fill="#fff"/><rect x="11" y="9" width="1" height="1" fill="#ACA899"/><rect x="11" y="8" width="1" height="1" fill="#fff"/></svg>
</body></html>
